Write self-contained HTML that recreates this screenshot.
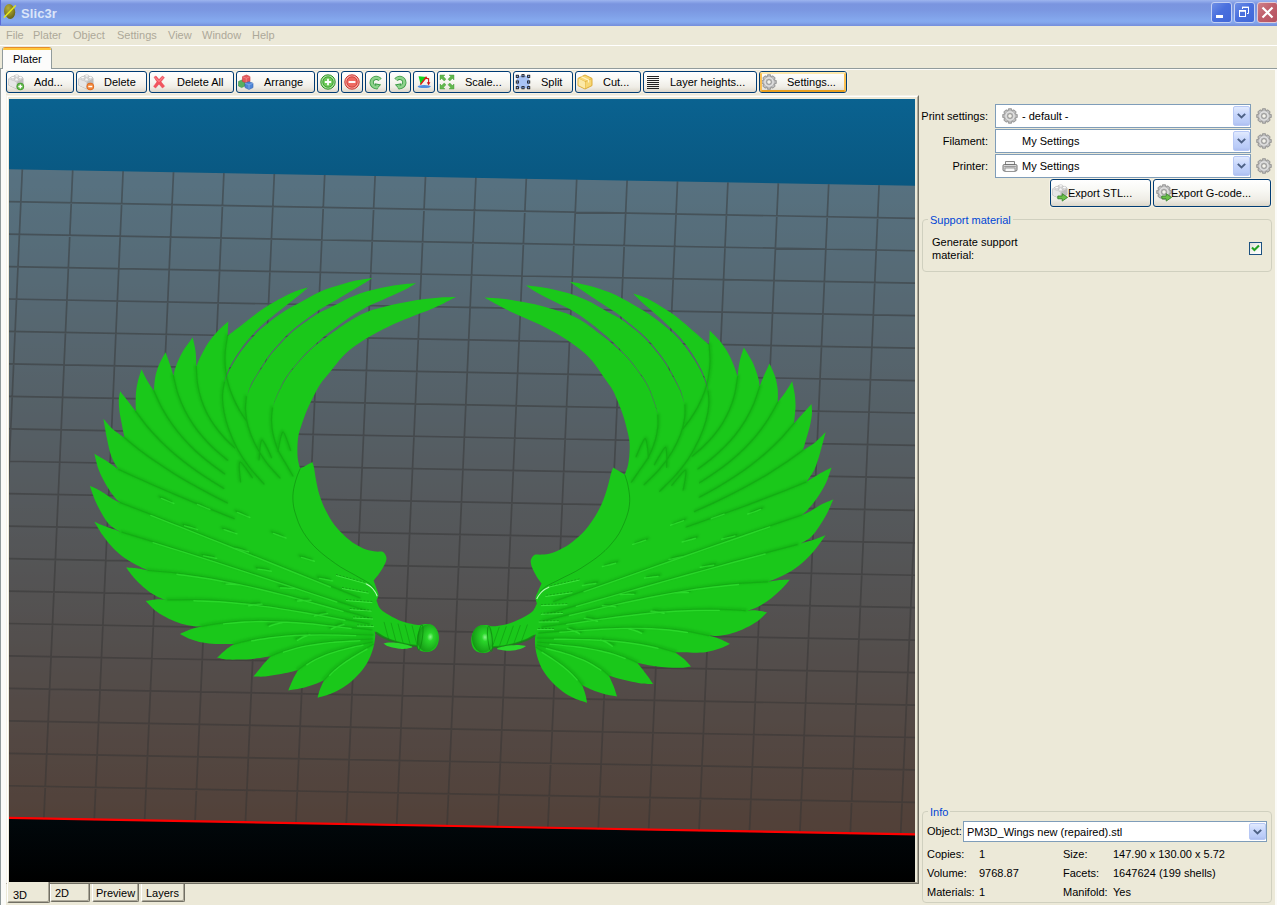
<!DOCTYPE html>
<html lang="en">
<head>
<meta charset="utf-8">
<title>Slic3r</title>
<style>
html,body{margin:0;padding:0;}
body{width:1277px;height:905px;overflow:hidden;position:relative;background:#ece9d8;
 font-family:"Liberation Sans",sans-serif;font-size:11px;color:#000;line-height:13px;}
.abs{position:absolute;}
.t{position:absolute;white-space:nowrap;line-height:13px;height:13px;}
#titlebar{left:0;top:0;width:1277px;height:26px;
 background:linear-gradient(to bottom,#9db5ee 0,#8aa4e8 2px,#7a94df 4px,#7b97e1 10px,#80a1e8 16px,#86aaef 21px,#83a4ea 23px,#7893df 25px,#7690dd 26px);}
#title{left:21px;top:6px;font-weight:bold;font-size:13px;line-height:16px;height:16px;color:#dbe5f9;letter-spacing:0.1px;}
.wb{position:absolute;top:2px;width:19px;height:19px;border:1px solid #c3d0f3;border-radius:3px;
 background:linear-gradient(135deg,#6f8fe6 0,#4a70de 45%,#4067d8 100%);}
.wb.close{background:linear-gradient(135deg,#cf8088 0,#c0606c 45%,#b55260 100%);border-color:#e3c9d3;}
#menubar{left:0;top:26px;width:1277px;height:19px;}
#menubar .t{color:#aca899;top:3px;}
#whiteline{left:0;top:45px;width:1277px;height:1px;background:#fff;}
/* notebook */
#nbtop{left:0;top:68px;width:1277px;height:1px;background:#919b9c;}
#nbtop2{left:1px;top:69px;width:1276px;height:1px;background:#fcfcfa;}
#nbleft{left:0;top:68px;width:1px;height:837px;background:#919b9c;}
#nbwhiteL{left:1px;top:69px;width:5px;height:836px;background:#fbfbf8;}
#nbwhiteR{left:1275px;top:69px;width:2px;height:836px;background:#fbfbf8;}
#tab{left:2px;top:47px;width:48px;height:22px;background:#fcfcfb;border:1px solid #919b9c;border-top:none;border-bottom:none;border-radius:3px 3px 0 0;overflow:hidden;}
#tab i{position:absolute;left:-1px;top:0;width:52px;height:1px;background:#e68b2c;}
#tab b{position:absolute;left:-1px;top:1px;width:52px;height:2px;background:#ffc73c;}
/* xp buttons */
.btn{position:absolute;box-sizing:border-box;border:1px solid #003c74;border-radius:3px;
 background:linear-gradient(to bottom,#ffffff 0,#f8f8f4 40%,#efede6 75%,#dcd7ca 100%);box-shadow:0 0 0 1px #f6f1e4;}
.btn .t{top:4px;}
.btn svg{position:absolute;}
.btn.hot:after{content:"";position:absolute;left:0;top:0;right:0;bottom:0;border-radius:2px;border:2px solid #f9c053;border-top-color:#fde8ab;border-bottom-color:#e8a020;}
/* combos */
.combo{position:absolute;box-sizing:border-box;border:1px solid #7f9db9;background:#fff;}
.combo .dd{position:absolute;right:0px;top:1px;bottom:1px;width:17px;border-radius:2px;border:1px solid #b7c8f5;box-sizing:border-box;
 background:linear-gradient(to bottom,#e1eafe 0,#c6d5fb 45%,#b9cbf7 85%,#aebff0 100%);}
.combo .dd svg{position:absolute;left:3px;top:50%;margin-top:-3px;}
.grp{position:absolute;box-sizing:border-box;border:1px solid #d0d0bf;border-radius:4px;}
.leg{position:absolute;background:#ece9d8;color:#0046d5;white-space:nowrap;line-height:13px;height:13px;padding:0 2px;}
/* viewport frame */
#vframe{left:6px;top:95px;width:913px;height:789px;box-sizing:border-box;border-left:1px solid #f6f3e8;border-top:1px solid #f6f3e8;border-right:1px solid #716f64;border-bottom:1px solid #716f64;background:#ece9d8;}
#vframe2{left:7px;top:96px;width:911px;height:787px;box-sizing:border-box;border-left:1px solid #ffffff;border-top:1px solid #ffffff;border-right:1px solid #aca899;border-bottom:1px solid #aca899;}
.btab{position:absolute;box-sizing:border-box;background:#ece9d8;border-left:1px solid #fff;border-right:1px solid #716f64;border-bottom:1px solid #716f64;box-shadow:inset -1px -1px 0 #aca899;border-radius:0 0 2px 2px;}
</style>
</head>
<body>
<!-- title bar -->
<div id="titlebar" class="abs"></div>
<svg class="abs" style="left:0;top:0" width="22" height="25" viewBox="0 0 22 25">
 <defs><radialGradient id="ig" cx="0.4" cy="0.3" r="0.75"><stop offset="0" stop-color="#b3ad3c"/><stop offset="0.55" stop-color="#8a8424"/><stop offset="1" stop-color="#5f5e16"/></radialGradient>
 <clipPath id="icA"><polygon points="3.2,18.3 16.2,4.8 16.2,-5 -5,-5 -5,18.3"/></clipPath>
 <clipPath id="icB"><polygon points="3.2,18.3 16.2,4.8 26,4.8 26,26 3.2,26"/></clipPath></defs>
 <ellipse cx="9.2" cy="10.9" rx="5.2" ry="6.9" fill="url(#ig)" clip-path="url(#icA)"/>
 <ellipse cx="10.2" cy="12.3" rx="5.0" ry="6.8" fill="url(#ig)" clip-path="url(#icB)"/>
 <path d="M4.4 17.1 L15.2 5.9" stroke="#e6e81c" stroke-width="1.5" stroke-linecap="round"/>
 <rect x="0" y="0" width="1" height="26" fill="#5a6bd8"/>
</svg>
<div id="title" class="t">Slic3r</div>
<div class="wb" style="left:1211px"><svg width="19" height="19"><rect x="4" y="12" width="7" height="3" fill="#fff"/></svg></div>
<div class="wb" style="left:1234px"><svg width="19" height="19"><path d="M7.5 4.5h6v6h-1.5M7.5 4.5v1.5" stroke="#fff" stroke-width="1" fill="none"/><rect x="7" y="3.6" width="7" height="1.4" fill="#fff"/><rect x="4.5" y="8" width="6" height="5.5" stroke="#fff" stroke-width="1" fill="none"/><rect x="4" y="7" width="7" height="1.6" fill="#fff"/></svg></div>
<div class="wb close" style="left:1257px"><svg width="19" height="19"><path d="M4.5 4.5l10 10M14.5 4.5l-10 10" stroke="#fff" stroke-width="2.2"/></svg></div>

<!-- menu bar -->
<div id="menubar" class="abs">
 <span class="t" style="left:6px">File</span>
 <span class="t" style="left:33px">Plater</span>
 <span class="t" style="left:73px">Object</span>
 <span class="t" style="left:117px">Settings</span>
 <span class="t" style="left:168px">View</span>
 <span class="t" style="left:202px">Window</span>
 <span class="t" style="left:252px">Help</span>
</div>
<div id="whiteline" class="abs"></div>

<!-- notebook -->
<div id="nbtop" class="abs"></div><div id="nbtop2" class="abs"></div>
<div id="nbwhiteL" class="abs"></div><div id="nbwhiteR" class="abs"></div>
<div id="nbleft" class="abs"></div>
<div id="tab" class="abs"><i></i><b></b><span class="t" style="left:10px;top:6px">Plater</span></div>

<div class="btn" style="left:6px;top:71px;width:68px;height:22px"><svg width="17" height="17" viewBox="0 0 17 17" style="left:1px;top:2px"><path d="M0.8 4.8 L7 1.6 L15 4.2 L15 10.6 L8.8 14.8 L0.8 11.2Z" fill="#dcdcdc" stroke="#a9a9a9" stroke-width="0.8"/>
<path d="M0.8 4.8 L8.8 7.8 L8.8 14.8 L0.8 11.2Z" fill="#e6e6e6"/>
<path d="M8.8 7.8 L15 4.2 L15 10.6 L8.8 14.8Z" fill="#bcbcbc"/>
<path d="M0.8 4.8 L7 1.6 L15 4.2 L8.8 7.8Z" fill="#f4f4f4"/>
<path d="M0.8 4.8 L8.8 7.8 L15 4.2M8.8 7.8V14.8" stroke="#c9c9c9" stroke-width="0.6" fill="none"/>
<g fill="#fbfbfb" stroke="#b4b4b4" stroke-width="0.55"><path d="M2.9 3.6v1.1a2 1.15 0 0 0 4 0v-1.1z"/><ellipse cx="4.9" cy="3.6" rx="2" ry="1.15"/>
<path d="M6.8 1.9v1.1a2 1.15 0 0 0 4 0v-1.1z"/><ellipse cx="8.8" cy="1.9" rx="2" ry="1.15"/>
<path d="M6.6 5.2v1.1a2 1.15 0 0 0 4 0v-1.1z"/><ellipse cx="8.6" cy="5.2" rx="2" ry="1.15"/>
<path d="M10.4 3.5v1.1a2 1.15 0 0 0 4 0v-1.1z"/><ellipse cx="12.4" cy="3.5" rx="2" ry="1.15"/></g>
<circle cx="12.3" cy="12.5" r="3.8" fill="#3f9b2c"/><circle cx="12.3" cy="12.5" r="3" fill="#7fd060" fill-opacity="0.55"/>
<path d="M12.3 10.5v4M10.3 12.5h4" stroke="#fff" stroke-width="1.4"/></svg><span class="t" style="left:27px">Add...</span></div>
<div class="btn" style="left:76px;top:71px;width:71px;height:22px"><svg width="17" height="17" viewBox="0 0 17 17" style="left:1px;top:2px"><path d="M0.8 4.8 L7 1.6 L15 4.2 L15 10.6 L8.8 14.8 L0.8 11.2Z" fill="#dcdcdc" stroke="#a9a9a9" stroke-width="0.8"/>
<path d="M0.8 4.8 L8.8 7.8 L8.8 14.8 L0.8 11.2Z" fill="#e6e6e6"/>
<path d="M8.8 7.8 L15 4.2 L15 10.6 L8.8 14.8Z" fill="#bcbcbc"/>
<path d="M0.8 4.8 L7 1.6 L15 4.2 L8.8 7.8Z" fill="#f4f4f4"/>
<path d="M0.8 4.8 L8.8 7.8 L15 4.2M8.8 7.8V14.8" stroke="#c9c9c9" stroke-width="0.6" fill="none"/>
<g fill="#fbfbfb" stroke="#b4b4b4" stroke-width="0.55"><path d="M2.9 3.6v1.1a2 1.15 0 0 0 4 0v-1.1z"/><ellipse cx="4.9" cy="3.6" rx="2" ry="1.15"/>
<path d="M6.8 1.9v1.1a2 1.15 0 0 0 4 0v-1.1z"/><ellipse cx="8.8" cy="1.9" rx="2" ry="1.15"/>
<path d="M6.6 5.2v1.1a2 1.15 0 0 0 4 0v-1.1z"/><ellipse cx="8.6" cy="5.2" rx="2" ry="1.15"/>
<path d="M10.4 3.5v1.1a2 1.15 0 0 0 4 0v-1.1z"/><ellipse cx="12.4" cy="3.5" rx="2" ry="1.15"/></g>
<circle cx="12.3" cy="12.5" r="3.8" fill="#e0661a"/><circle cx="12.3" cy="12.5" r="3" fill="#ffa55a" fill-opacity="0.55"/>
<path d="M10.3 12.5h4" stroke="#fff" stroke-width="1.5"/></svg><span class="t" style="left:27px">Delete</span></div>
<div class="btn" style="left:149px;top:71px;width:85px;height:22px"><svg width="16" height="16" viewBox="0 0 16 16" style="left:1px;top:2px">
<path d="M3 3.2 L5 2 L8 5.6 L11.4 2 L13.4 3.6 L10 7.8 L13.6 12.2 L11.4 14 L8 10 L4.6 14 L2.6 12.4 L6 7.8Z" fill="#f2545f" stroke="#e8404c" stroke-width="0.5"/>
<path d="M4 3.4 L8 7.6 L12 3.2" stroke="#ff9aa0" stroke-width="0.9" fill="none"/></svg><span class="t" style="left:27px">Delete All</span></div>
<div class="btn" style="left:236px;top:71px;width:79px;height:22px"><svg width="16" height="16" viewBox="0 0 16 16" style="left:1px;top:2px">
<path d="M0.5 7.5 L4 6 L7 7.2 V12 L3.6 13.6 L0.5 12Z" fill="#58b060" stroke="#3e8f48" stroke-width="0.6"/>
<path d="M4.5 2.6 L8.5 1 L12 2.6 V7.4 L8.5 9 L4.5 7.4Z" fill="#e5595c" stroke="#c23a40" stroke-width="0.6"/>
<path d="M4.5 2.6 L8.3 4.2 L12 2.6M8.3 4.2V9" stroke="#f59a9a" stroke-width="0.6" fill="none"/>
<path d="M7 9.2 L11 7.8 L15 9.2 V13.6 L11 15.4 L7 13.6Z" fill="#4f86d8" stroke="#2f62b0" stroke-width="0.6"/>
<path d="M7 9.2 L11 10.8 L15 9.2M11 10.8V15.4" stroke="#9cc0f2" stroke-width="0.6" fill="none"/></svg><span class="t" style="left:27px">Arrange</span></div>
<div class="btn" style="left:317px;top:71px;width:22px;height:22px"><svg width="16" height="16" viewBox="0 0 16 16" style="left:2px;top:2px">
<circle cx="8" cy="8" r="7.2" fill="#a9e59a" stroke="#2e8f2a" stroke-width="1"/>
<circle cx="8" cy="8" r="5.2" fill="#6fcb5a" stroke="#2e8f2a" stroke-width="0.8"/><path d="M8 4.8v6.4M4.8 8h6.4" stroke="#fff" stroke-width="1.8"/></svg></div>
<div class="btn" style="left:341px;top:71px;width:22px;height:22px"><svg width="16" height="16" viewBox="0 0 16 16" style="left:2px;top:2px">
<circle cx="8" cy="8" r="7.2" fill="#f7a59f" stroke="#c8342e" stroke-width="1"/>
<circle cx="8" cy="8" r="5.2" fill="#ee6a62" stroke="#c8342e" stroke-width="0.8"/><path d="M4.6 8h6.8" stroke="#fff" stroke-width="1.9"/></svg></div>
<div class="btn" style="left:365px;top:71px;width:22px;height:22px"><svg width="16" height="16" viewBox="0 0 16 16" style="left:2px;top:2px"><g>
<path d="M12 5.8 A4.6 4.6 0 1 0 9.6 12.9" stroke="#3c9a46" stroke-width="4.2" fill="none"/>
<path d="M6.6 9.2 L13.2 10.6 L8.6 15.6Z" fill="#3c9a46"/>
<path d="M12 5.8 A4.6 4.6 0 1 0 9.6 12.9" stroke="#8ed38c" stroke-width="2.6" fill="none"/>
<path d="M8 10.4 L11.6 11.2 L9 14Z" fill="#8ed38c"/></g></svg></div>
<div class="btn" style="left:389px;top:71px;width:22px;height:22px"><svg width="16" height="16" viewBox="0 0 16 16" style="left:2px;top:2px"><g transform="translate(16,0) scale(-1,1)">
<path d="M12 5.8 A4.6 4.6 0 1 0 9.6 12.9" stroke="#3c9a46" stroke-width="4.2" fill="none"/>
<path d="M6.6 9.2 L13.2 10.6 L8.6 15.6Z" fill="#3c9a46"/>
<path d="M12 5.8 A4.6 4.6 0 1 0 9.6 12.9" stroke="#8ed38c" stroke-width="2.6" fill="none"/>
<path d="M8 10.4 L11.6 11.2 L9 14Z" fill="#8ed38c"/></g></svg></div>
<div class="btn" style="left:413px;top:71px;width:22px;height:22px"><svg width="16" height="16" viewBox="0 0 16 16" style="left:2px;top:2px">
<ellipse cx="8.2" cy="12.6" rx="6.6" ry="1.5" fill="#4f8fe0"/>
<path d="M2.6 2.2 L10.4 3 L4.6 10.4Z" fill="#12d41e"/>
<path d="M4.4 10.6 L10.6 2.8" stroke="#e01818" stroke-width="1.5" fill="none"/>
<path d="M10 4.4 L12.6 4.8 L12.6 9" stroke="#d01818" stroke-width="1.1" fill="none"/>
<path d="M10.8 8.2 L14.4 8.2 L12.6 11.4Z" fill="#d01818"/></svg></div>
<div class="btn" style="left:437px;top:71px;width:74px;height:22px"><svg width="16" height="16" viewBox="0 0 16 16" style="left:1px;top:2px">
<g transform="translate(1,1)"><path d="M0 0 L5 0 L3.4 1.6 L6 4.2 L4.2 6 L1.6 3.4 L0 5Z" fill="#62b84e" stroke="#3f9435" stroke-width="0.4"/></g><g transform="translate(15,1) scale(-1,1)"><path d="M0 0 L5 0 L3.4 1.6 L6 4.2 L4.2 6 L1.6 3.4 L0 5Z" fill="#62b84e" stroke="#3f9435" stroke-width="0.4"/></g>
<g transform="translate(1,15) scale(1,-1)"><path d="M0 0 L5 0 L3.4 1.6 L6 4.2 L4.2 6 L1.6 3.4 L0 5Z" fill="#62b84e" stroke="#3f9435" stroke-width="0.4"/></g><g transform="translate(15,15) scale(-1,-1)"><path d="M0 0 L5 0 L3.4 1.6 L6 4.2 L4.2 6 L1.6 3.4 L0 5Z" fill="#62b84e" stroke="#3f9435" stroke-width="0.4"/></g></svg><span class="t" style="left:27px">Scale...</span></div>
<div class="btn" style="left:513px;top:71px;width:60px;height:22px"><svg width="16" height="16" viewBox="0 0 16 16" style="left:1px;top:2px">
<rect x="2.2" y="2.2" width="11.6" height="11.6" fill="#a9c4f5" stroke="#6f97e0" stroke-width="0.8" stroke-dasharray="1.5 1"/><rect x="1.2" y="1.2" width="2.2" height="2.2" fill="#7d9fe0" stroke="#111" stroke-width="0.8"/><rect x="6.9" y="0.6000000000000001" width="2.2" height="2.2" fill="#7d9fe0" stroke="#111" stroke-width="0.8"/><rect x="12.6" y="1.2" width="2.2" height="2.2" fill="#7d9fe0" stroke="#111" stroke-width="0.8"/><rect x="1.2" y="6.9" width="2.2" height="2.2" fill="#7d9fe0" stroke="#111" stroke-width="0.8"/><rect x="12.6" y="6.9" width="2.2" height="2.2" fill="#7d9fe0" stroke="#111" stroke-width="0.8"/><rect x="1.2" y="12.6" width="2.2" height="2.2" fill="#7d9fe0" stroke="#111" stroke-width="0.8"/><rect x="6.9" y="12.6" width="2.2" height="2.2" fill="#7d9fe0" stroke="#111" stroke-width="0.8"/><rect x="12.6" y="12.6" width="2.2" height="2.2" fill="#7d9fe0" stroke="#111" stroke-width="0.8"/></svg><span class="t" style="left:27px">Split</span></div>
<div class="btn" style="left:575px;top:71px;width:66px;height:22px"><svg width="16" height="16" viewBox="0 0 16 16" style="left:1px;top:2px">
<path d="M1 4.4 L8 1 L15 4.4 V11.6 L8 15 L1 11.6Z" fill="#f7d774" stroke="#d9a52a" stroke-width="0.9"/>
<path d="M1 4.4 L8 7.8 L15 4.4M8 7.8V15" stroke="#e0b040" stroke-width="0.8" fill="none"/>
<path d="M1.6 4.6 L8 7.8 V14.4 L1.6 11.3Z" fill="#fbe9a8"/>
<path d="M4.4 2.8 L11.6 6.2V8.6" stroke="#fff4c8" stroke-width="1.2" fill="none"/></svg><span class="t" style="left:27px">Cut...</span></div>
<div class="btn" style="left:643px;top:71px;width:114px;height:22px"><svg width="16" height="16" viewBox="0 0 16 16" style="left:1px;top:2px"><rect x="2" y="2" width="12" height="1" fill="#222"/><rect x="2" y="4" width="12" height="1" fill="#222"/><rect x="2" y="6" width="12" height="1" fill="#222"/><rect x="2" y="8" width="12" height="1" fill="#222"/><rect x="2" y="10" width="12" height="1" fill="#222"/><rect x="2" y="12" width="12" height="1" fill="#222"/><rect x="2" y="14" width="12" height="1" fill="#222"/></svg><span class="t" style="left:26px">Layer heights...</span></div>
<div class="btn hot" style="left:759px;top:71px;width:88px;height:22px"><svg width="16" height="16" viewBox="0 0 16 16" style="left:1px;top:2px">
<polygon points="15.24,6.46 15.24,9.54 12.99,10.05 12.98,10.08 14.21,12.03 12.03,14.21 10.08,12.98 10.05,12.99 9.54,15.24 6.46,15.24 5.95,12.99 5.92,12.98 3.97,14.21 1.79,12.03 3.02,10.08 3.01,10.05 0.76,9.54 0.76,6.46 3.01,5.95 3.02,5.92 1.79,3.97 3.97,1.79 5.92,3.02 5.95,3.01 6.46,0.76 9.54,0.76 10.05,3.01 10.08,3.02 12.03,1.79 14.21,3.97 12.98,5.92 12.99,5.95" fill="#bdbdbd" stroke="#858585" stroke-width="0.8"/>
<circle cx="8" cy="8" r="4.1" fill="none" stroke="#e6e6e6" stroke-width="1.3"/>
<circle cx="8" cy="8" r="2.3" fill="#f4f3ec" stroke="#858585" stroke-width="0.8"/></svg><span class="t" style="left:27px">Settings...</span></div>

<!-- viewport -->
<div id="vframe" class="abs"></div><div id="vframe2" class="abs"></div>
<svg width="906" height="783" viewBox="9 99 906 783" style="position:absolute;left:9px;top:99px;display:block">
<defs><linearGradient id="bg" x1="0" y1="0" x2="0" y2="1"><stop offset="0" stop-color="#0a6290"/><stop offset="1" stop-color="#000000"/></linearGradient></defs>
<rect x="9" y="99" width="906" height="783" fill="url(#bg)"/>
<polygon points="7,169.16 917,185.91 917,834.91 7,818.16" fill="#cc9980" fill-opacity="0.4"/>
<path d="M7,201.61L917,218.36M7,234.06L917,250.81M7,266.51L917,283.26M7,298.96L917,315.71M7,331.41L917,348.16M7,363.86L917,380.61M7,396.31L917,413.06M7,428.76L917,445.51M7,461.21L917,477.96M7,493.66L917,510.41M7,526.11L917,542.86M7,558.56L917,575.31M7,591.01L917,607.76M7,623.46L917,640.21M7,655.91L917,672.66M7,688.36L917,705.11M7,720.81L917,737.56M7,753.26L917,770.01M7,785.71L917,802.46M-28.10,168.52L-56.98,817.52M22.30,169.44L-6.58,818.44M72.70,170.37L43.82,819.37M123.10,171.30L94.22,820.30M173.50,172.23L144.62,821.23M223.90,173.15L195.02,822.15M274.30,174.08L245.42,823.08M324.70,175.01L295.82,824.01M375.10,175.94L346.22,824.94M425.50,176.86L396.62,825.86M475.90,177.79L447.02,826.79M526.30,178.72L497.42,827.72M576.70,179.65L547.82,828.65M627.10,180.57L598.22,829.57M677.50,181.50L648.62,830.50M727.90,182.43L699.02,831.43M778.30,183.36L749.42,832.36M828.70,184.28L799.82,833.28M879.10,185.21L850.22,834.21M929.50,186.14L900.62,835.14M979.90,187.06L951.02,836.06M1030.30,187.99L1001.42,836.99" stroke="#333333" stroke-opacity="0.47" stroke-width="1.7" fill="none"/>
<defs><filter id="soft" x="-5%" y="-5%" width="110%" height="110%"><feGaussianBlur stdDeviation="1.1"/></filter><radialGradient id="knobL" cx="0.62" cy="0.45" r="0.6"><stop offset="0" stop-color="#8df58d"/><stop offset="0.25" stop-color="#2ad62a"/><stop offset="1" stop-color="#149a14"/></radialGradient></defs>
<clipPath id="clipL"><path d="M455.9,297.1C453.3,297.2 445.8,297.2 440.6,297.5C435.4,297.8 430.1,298.4 424.9,299.0C419.7,299.6 414.4,300.5 409.2,301.4C404.0,302.3 398.1,303.5 393.5,304.5C388.9,305.5 385.7,306.6 381.8,307.6C377.9,308.7 373.9,309.4 370.0,310.8C366.1,312.2 361.9,314.1 358.2,316.0C354.5,317.9 351.5,319.8 348.0,322.0C344.5,324.2 340.2,327.2 337.1,329.4C334.0,331.6 331.9,332.9 329.1,335.0C326.3,337.1 322.4,340.4 320.1,342.1C317.8,343.9 317.7,343.6 315.5,345.5C313.4,347.3 309.9,350.3 307.1,353.2C304.2,356.0 301.1,359.5 298.4,362.6C295.6,365.8 292.9,368.9 290.6,372.0C288.2,375.1 286.0,378.5 284.3,381.4C282.6,384.2 281.7,386.3 280.4,389.1C279.0,391.9 277.5,394.9 276.2,398.1C274.9,401.2 273.1,406.3 272.5,408.0C273.0,406.3 274.5,401.1 275.8,397.9C277.0,394.7 278.5,391.7 279.8,388.9C281.2,386.1 282.0,383.9 283.7,381.0C285.4,378.2 287.7,374.7 290.0,371.6C292.4,368.4 295.1,365.3 297.8,362.2C300.6,359.0 303.7,355.5 306.5,352.6C309.4,349.7 312.8,346.7 314.9,344.7C317.0,342.8 316.7,342.9 319.1,340.9C321.5,338.8 326.1,334.8 329.1,332.4C332.1,330.0 334.0,328.7 337.1,326.4C340.2,324.1 344.5,321.0 348.0,318.6C351.5,316.2 354.5,314.2 358.2,312.0C361.9,309.8 366.1,307.3 370.0,305.3C373.9,303.3 377.9,301.9 381.8,300.2C385.7,298.5 389.6,296.9 393.5,295.1C397.4,293.3 401.6,291.6 405.3,289.6C409.0,287.6 414.1,284.4 415.9,283.3C413.5,283.5 406.4,283.9 401.4,284.5C396.4,285.1 390.9,285.9 385.7,286.9C380.5,287.9 374.3,289.3 370.0,290.4C365.7,291.5 363.3,292.4 360.0,293.6C356.7,294.8 353.2,296.2 350.0,297.6C346.8,299.0 344.5,300.3 341.0,302.0C337.5,303.7 332.8,306.2 329.2,308.0C325.6,309.8 323.3,310.5 319.7,312.6C316.0,314.7 310.9,318.2 307.3,320.7C303.7,323.2 301.1,324.9 297.9,327.5C294.6,330.1 291.1,332.9 287.7,336.2C284.3,339.5 280.5,343.7 277.4,347.1C274.4,350.5 271.9,353.3 269.5,356.4C267.1,359.5 265.1,362.8 263.2,365.7C261.2,368.7 259.5,371.6 257.7,374.3C256.0,377.0 254.2,379.7 252.9,382.2C251.6,384.6 250.8,386.7 249.7,389.1C248.6,391.5 247.0,395.5 246.4,396.8C246.9,395.5 248.3,391.4 249.3,388.9C250.3,386.4 251.0,384.3 252.3,381.8C253.6,379.3 255.4,376.7 257.1,373.9C258.7,371.1 260.5,368.3 262.4,365.3C264.4,362.2 266.3,359.0 268.7,355.8C271.1,352.6 273.5,349.7 276.6,346.3C279.6,342.9 283.3,338.5 286.7,335.2C290.1,331.9 293.7,329.0 296.9,326.3C300.2,323.7 302.7,321.9 306.3,319.3C309.9,316.7 314.9,313.0 318.3,310.6C321.8,308.3 323.9,307.1 327.0,305.2C330.1,303.3 333.5,301.5 337.1,299.4C340.7,297.3 344.9,294.9 348.8,292.6C352.7,290.3 356.6,287.9 360.6,285.5C364.6,283.1 370.7,279.2 372.7,278.0C370.7,278.3 364.6,279.1 360.6,279.8C356.6,280.5 352.7,281.2 348.8,282.2C344.9,283.2 341.0,284.5 337.1,285.7C333.2,286.9 329.2,288.0 325.3,289.6C321.4,291.2 317.4,293.1 313.5,295.1C309.6,297.1 305.6,299.4 301.8,301.4C298.1,303.4 294.5,305.2 291.0,307.2C287.5,309.2 284.4,311.2 281.0,313.5C277.6,315.8 274.2,318.2 270.7,320.9C267.1,323.7 263.1,326.8 259.6,330.1C256.0,333.5 252.5,337.4 249.4,341.0C246.2,344.6 243.4,348.2 240.7,351.8C238.1,355.5 235.7,359.1 233.5,362.7C231.4,366.3 229.4,370.2 227.9,373.5C226.4,376.8 225.0,380.9 224.4,382.4C224.8,380.9 225.7,376.5 227.1,373.1C228.4,369.7 230.4,365.8 232.5,362.1C234.5,358.4 236.9,354.7 239.5,351.0C242.1,347.3 244.9,343.5 248.0,339.8C251.1,336.1 254.7,332.1 258.2,328.7C261.7,325.2 265.7,322.0 269.1,319.1C272.6,316.1 275.5,313.7 279.0,310.9C282.5,308.2 286.6,305.0 290.0,302.4C293.4,299.8 296.4,297.6 299.4,295.1C302.4,292.6 306.6,288.8 308.0,287.5C306.3,288.0 301.2,289.2 297.8,290.4C294.4,291.6 292.5,292.4 287.7,294.8C282.9,297.2 274.3,301.8 268.9,305.1C263.5,308.4 259.6,311.3 255.2,314.5C250.8,317.7 246.4,321.4 242.7,324.3C238.9,327.2 235.2,330.1 232.7,332.0C230.2,333.9 228.4,335.1 227.6,335.7L228.3,321.5C226.5,323.1 221.1,327.6 217.6,331.3C214.1,335.0 210.5,339.4 207.6,343.8C204.7,348.2 202.0,353.8 200.1,357.6C198.2,361.4 196.9,365.3 196.3,366.8C196.2,364.2 196.2,356.3 195.6,351.4C195.0,346.5 193.2,339.7 192.7,337.4C191.1,339.6 186.0,346.0 183.2,350.8C180.4,355.6 177.6,361.9 176.0,366.0C174.4,370.1 173.8,374.1 173.4,375.7C172.9,373.9 171.5,369.0 170.2,365.1C168.9,361.2 166.4,354.4 165.6,352.3C164.5,354.4 160.6,360.9 158.9,365.1C157.2,369.3 156.0,373.3 155.2,377.6C154.4,381.9 154.1,388.6 153.9,390.8C152.9,389.2 149.8,385.0 147.7,381.4C145.6,377.8 142.4,371.2 141.4,369.2C140.8,371.4 138.5,378.3 137.6,382.6C136.7,386.9 136.1,390.4 135.8,395.2C135.5,400.0 135.8,408.6 135.8,411.3C134.9,410.1 132.7,407.2 130.1,403.9C127.5,400.5 121.8,393.3 120.1,391.2C119.9,392.7 118.9,396.8 118.8,400.2C118.7,403.6 119.0,407.3 119.5,411.5C120.0,415.7 121.2,420.8 122.0,425.2C122.8,429.6 124.1,435.7 124.5,437.8C122.5,436.3 116.1,432.2 112.6,429.0C109.1,425.8 104.9,420.5 103.4,418.8C104.0,422.1 105.7,432.6 107.0,438.8C108.3,445.1 109.5,451.4 111.3,456.3C113.1,461.2 116.3,466.0 117.6,468.2C118.8,470.4 118.6,469.3 118.8,469.5C118.2,469.1 117.4,468.6 115.1,467.0C112.8,465.4 108.5,462.3 105.1,460.1C101.6,457.9 96.2,454.9 94.4,453.8C95.1,456.5 96.8,464.9 98.8,470.1C100.8,475.3 103.6,480.6 106.3,485.2C109.0,489.8 112.7,494.8 115.1,497.7C117.5,500.6 119.6,501.9 120.5,502.7C119.2,502.1 115.8,500.8 112.6,498.9C109.4,497.0 105.1,493.6 101.3,491.4C97.5,489.2 91.7,486.7 89.8,485.8C90.7,488.2 93.1,495.7 95.0,500.2C96.9,504.7 99.0,508.7 101.3,512.7C103.6,516.7 106.1,521.1 108.8,524.0C111.5,526.9 115.4,528.9 117.6,530.3C119.8,531.7 121.3,532.0 122.0,532.3C121.3,532.0 120.4,531.7 117.6,530.7C114.8,529.7 109.0,527.8 105.1,526.3C101.2,524.8 96.2,522.5 94.4,521.7C95.8,523.9 99.6,530.8 102.6,535.1C105.6,539.4 109.0,543.9 112.6,547.6C116.1,551.4 119.9,554.7 123.9,557.6C127.9,560.5 132.3,563.0 136.4,565.1C140.5,567.2 146.3,569.6 148.3,570.5C146.3,570.1 140.1,568.8 136.4,568.3C132.7,567.8 127.8,567.7 126.1,567.6C127.4,569.3 131.1,574.6 133.9,577.7C136.7,580.8 139.6,583.7 142.7,586.4C145.8,589.1 149.4,591.9 152.7,594.0C156.0,596.1 160.1,598.0 162.7,599.0C165.2,600.0 167.1,599.8 168.0,600.0C166.1,599.9 160.0,599.2 156.3,599.4C152.6,599.5 147.5,600.6 145.7,600.9C147.5,602.6 152.5,608.3 156.3,611.3C160.2,614.3 164.6,616.7 168.8,618.8C173.0,620.9 177.2,622.5 181.4,623.8C185.6,625.0 190.5,625.9 193.9,626.3C197.3,626.7 200.7,626.3 202.0,626.3C200.0,626.8 193.8,628.2 190.1,629.5C186.4,630.8 181.8,633.2 180.1,633.9C181.8,634.7 186.3,637.4 190.1,638.9C193.9,640.4 198.5,641.8 202.7,642.6C206.9,643.4 211.0,643.7 215.2,643.9C219.4,644.1 224.5,643.9 227.7,643.9C230.9,643.9 233.1,644.1 234.2,644.1C232.7,645.1 228.0,647.9 225.2,650.2C222.3,652.5 218.4,656.5 217.1,657.7C218.9,658.0 223.8,659.2 227.7,659.5C231.6,659.8 236.1,659.6 240.3,659.5C244.5,659.4 248.6,659.3 252.8,658.9C257.0,658.5 262.3,657.5 265.3,657.0C268.3,656.5 270.1,656.2 271.0,656.0C269.4,657.7 264.5,663.0 261.6,666.4C258.7,669.8 254.8,674.8 253.4,676.5C255.4,676.5 261.2,676.8 265.3,676.5C269.4,676.2 273.6,675.3 277.8,674.6C282.0,673.9 287.0,672.9 290.4,672.1C293.8,671.3 296.9,670.2 298.2,669.8C297.3,671.5 294.2,676.8 292.6,680.2C291.0,683.6 289.0,688.7 288.3,690.4C290.5,690.0 297.0,689.3 301.3,688.3C305.6,687.3 310.1,686.0 313.9,684.6C317.7,683.2 322.4,680.9 324.1,680.2C323.4,681.7 321.2,686.1 320.1,689.0C319.0,691.9 318.0,696.2 317.6,697.7C319.7,697.1 326.0,695.7 330.2,694.0C334.4,692.3 338.7,690.2 342.7,687.7C346.7,685.2 350.4,682.2 354.0,678.9C357.6,675.6 361.3,671.5 364.0,667.7C366.7,664.0 368.6,660.2 370.3,656.4C372.0,652.6 373.2,648.6 374.0,645.1C374.8,641.6 375.2,637.4 375.3,635.1C375.4,632.8 374.7,631.9 374.6,631.3C376.0,632.1 379.4,634.6 382.8,636.3C386.2,638.0 391.1,640.0 395.3,641.4C399.5,642.8 404.2,643.8 407.8,644.5C411.4,645.2 415.1,645.5 416.6,645.7C417.1,646.4 418.2,649.0 419.5,650.0C420.8,651.0 422.6,651.6 424.5,651.8C426.4,652.0 429.1,651.9 431.0,651.2C432.9,650.5 434.7,649.2 436.0,647.5C437.3,645.8 438.2,643.2 438.6,641.0C439.0,638.8 438.9,636.2 438.4,634.0C437.9,631.8 436.8,629.6 435.5,628.0C434.2,626.4 432.2,625.3 430.5,624.6C428.8,623.9 426.7,623.9 425.0,624.0C423.3,624.1 421.2,624.8 420.4,625.0C419.3,624.9 417.2,625.0 414.1,624.4C411.0,623.8 405.8,622.9 401.6,621.3C397.4,619.7 392.6,617.1 389.0,615.0C385.4,612.9 382.4,611.2 380.3,608.8C378.2,606.4 377.1,601.9 376.5,600.5C376.8,599.6 378.4,597.0 378.4,595.0C378.4,593.0 377.3,590.9 376.5,588.5C375.7,586.1 374.1,581.8 373.6,580.5C374.6,579.2 377.7,575.7 379.5,573.0C381.3,570.3 383.5,567.1 384.6,564.5C385.8,561.9 386.7,559.7 386.4,557.6C386.1,555.5 384.7,553.0 383.0,552.0C381.3,551.0 378.8,552.0 376.0,551.6C373.2,551.2 369.5,550.9 366.0,549.6C362.5,548.3 358.4,546.1 355.0,544.0C351.6,541.9 349.2,540.1 345.8,537.0C342.4,533.9 337.9,529.6 334.5,525.1C331.1,520.6 328.0,515.1 325.5,510.1C323.0,505.1 321.1,500.0 319.5,495.0C317.9,490.0 316.9,484.6 316.0,480.0C315.1,475.4 314.5,470.1 313.9,467.1C313.3,464.1 312.6,462.9 312.4,462.0C311.3,462.6 308.0,464.4 306.0,465.5C304.0,466.6 301.2,468.1 300.2,468.6C299.8,467.2 298.5,463.1 298.0,460.0C297.5,456.9 297.4,453.8 297.4,450.0C297.4,446.2 297.6,441.0 298.2,437.0C298.8,433.0 299.7,430.5 301.2,426.0C302.7,421.5 304.9,415.1 307.0,410.0C309.1,404.9 311.9,399.6 314.1,395.2C316.3,390.8 317.8,387.8 320.4,383.9C323.0,380.0 326.3,376.6 330.0,372.0C333.7,367.4 338.6,360.8 342.7,356.5C346.8,352.2 350.6,349.3 354.5,346.3C358.4,343.3 362.4,340.8 366.3,338.4C370.2,336.0 374.6,333.7 377.8,332.0C381.0,330.3 382.4,329.6 385.7,328.0C389.0,326.4 393.6,324.2 397.5,322.5C401.4,320.8 405.3,319.4 409.2,317.8C413.1,316.2 417.1,314.7 421.0,313.1C424.9,311.5 428.8,310.1 432.7,308.4C436.6,306.7 440.6,304.8 444.5,302.9C448.4,301.0 454.0,298.1 455.9,297.1Z"/></clipPath>
<path d="M455.9,297.1C453.3,297.2 445.8,297.2 440.6,297.5C435.4,297.8 430.1,298.4 424.9,299.0C419.7,299.6 414.4,300.5 409.2,301.4C404.0,302.3 398.1,303.5 393.5,304.5C388.9,305.5 385.7,306.6 381.8,307.6C377.9,308.7 373.9,309.4 370.0,310.8C366.1,312.2 361.9,314.1 358.2,316.0C354.5,317.9 351.5,319.8 348.0,322.0C344.5,324.2 340.2,327.2 337.1,329.4C334.0,331.6 331.9,332.9 329.1,335.0C326.3,337.1 322.4,340.4 320.1,342.1C317.8,343.9 317.7,343.6 315.5,345.5C313.4,347.3 309.9,350.3 307.1,353.2C304.2,356.0 301.1,359.5 298.4,362.6C295.6,365.8 292.9,368.9 290.6,372.0C288.2,375.1 286.0,378.5 284.3,381.4C282.6,384.2 281.7,386.3 280.4,389.1C279.0,391.9 277.5,394.9 276.2,398.1C274.9,401.2 273.1,406.3 272.5,408.0C273.0,406.3 274.5,401.1 275.8,397.9C277.0,394.7 278.5,391.7 279.8,388.9C281.2,386.1 282.0,383.9 283.7,381.0C285.4,378.2 287.7,374.7 290.0,371.6C292.4,368.4 295.1,365.3 297.8,362.2C300.6,359.0 303.7,355.5 306.5,352.6C309.4,349.7 312.8,346.7 314.9,344.7C317.0,342.8 316.7,342.9 319.1,340.9C321.5,338.8 326.1,334.8 329.1,332.4C332.1,330.0 334.0,328.7 337.1,326.4C340.2,324.1 344.5,321.0 348.0,318.6C351.5,316.2 354.5,314.2 358.2,312.0C361.9,309.8 366.1,307.3 370.0,305.3C373.9,303.3 377.9,301.9 381.8,300.2C385.7,298.5 389.6,296.9 393.5,295.1C397.4,293.3 401.6,291.6 405.3,289.6C409.0,287.6 414.1,284.4 415.9,283.3C413.5,283.5 406.4,283.9 401.4,284.5C396.4,285.1 390.9,285.9 385.7,286.9C380.5,287.9 374.3,289.3 370.0,290.4C365.7,291.5 363.3,292.4 360.0,293.6C356.7,294.8 353.2,296.2 350.0,297.6C346.8,299.0 344.5,300.3 341.0,302.0C337.5,303.7 332.8,306.2 329.2,308.0C325.6,309.8 323.3,310.5 319.7,312.6C316.0,314.7 310.9,318.2 307.3,320.7C303.7,323.2 301.1,324.9 297.9,327.5C294.6,330.1 291.1,332.9 287.7,336.2C284.3,339.5 280.5,343.7 277.4,347.1C274.4,350.5 271.9,353.3 269.5,356.4C267.1,359.5 265.1,362.8 263.2,365.7C261.2,368.7 259.5,371.6 257.7,374.3C256.0,377.0 254.2,379.7 252.9,382.2C251.6,384.6 250.8,386.7 249.7,389.1C248.6,391.5 247.0,395.5 246.4,396.8C246.9,395.5 248.3,391.4 249.3,388.9C250.3,386.4 251.0,384.3 252.3,381.8C253.6,379.3 255.4,376.7 257.1,373.9C258.7,371.1 260.5,368.3 262.4,365.3C264.4,362.2 266.3,359.0 268.7,355.8C271.1,352.6 273.5,349.7 276.6,346.3C279.6,342.9 283.3,338.5 286.7,335.2C290.1,331.9 293.7,329.0 296.9,326.3C300.2,323.7 302.7,321.9 306.3,319.3C309.9,316.7 314.9,313.0 318.3,310.6C321.8,308.3 323.9,307.1 327.0,305.2C330.1,303.3 333.5,301.5 337.1,299.4C340.7,297.3 344.9,294.9 348.8,292.6C352.7,290.3 356.6,287.9 360.6,285.5C364.6,283.1 370.7,279.2 372.7,278.0C370.7,278.3 364.6,279.1 360.6,279.8C356.6,280.5 352.7,281.2 348.8,282.2C344.9,283.2 341.0,284.5 337.1,285.7C333.2,286.9 329.2,288.0 325.3,289.6C321.4,291.2 317.4,293.1 313.5,295.1C309.6,297.1 305.6,299.4 301.8,301.4C298.1,303.4 294.5,305.2 291.0,307.2C287.5,309.2 284.4,311.2 281.0,313.5C277.6,315.8 274.2,318.2 270.7,320.9C267.1,323.7 263.1,326.8 259.6,330.1C256.0,333.5 252.5,337.4 249.4,341.0C246.2,344.6 243.4,348.2 240.7,351.8C238.1,355.5 235.7,359.1 233.5,362.7C231.4,366.3 229.4,370.2 227.9,373.5C226.4,376.8 225.0,380.9 224.4,382.4C224.8,380.9 225.7,376.5 227.1,373.1C228.4,369.7 230.4,365.8 232.5,362.1C234.5,358.4 236.9,354.7 239.5,351.0C242.1,347.3 244.9,343.5 248.0,339.8C251.1,336.1 254.7,332.1 258.2,328.7C261.7,325.2 265.7,322.0 269.1,319.1C272.6,316.1 275.5,313.7 279.0,310.9C282.5,308.2 286.6,305.0 290.0,302.4C293.4,299.8 296.4,297.6 299.4,295.1C302.4,292.6 306.6,288.8 308.0,287.5C306.3,288.0 301.2,289.2 297.8,290.4C294.4,291.6 292.5,292.4 287.7,294.8C282.9,297.2 274.3,301.8 268.9,305.1C263.5,308.4 259.6,311.3 255.2,314.5C250.8,317.7 246.4,321.4 242.7,324.3C238.9,327.2 235.2,330.1 232.7,332.0C230.2,333.9 228.4,335.1 227.6,335.7L228.3,321.5C226.5,323.1 221.1,327.6 217.6,331.3C214.1,335.0 210.5,339.4 207.6,343.8C204.7,348.2 202.0,353.8 200.1,357.6C198.2,361.4 196.9,365.3 196.3,366.8C196.2,364.2 196.2,356.3 195.6,351.4C195.0,346.5 193.2,339.7 192.7,337.4C191.1,339.6 186.0,346.0 183.2,350.8C180.4,355.6 177.6,361.9 176.0,366.0C174.4,370.1 173.8,374.1 173.4,375.7C172.9,373.9 171.5,369.0 170.2,365.1C168.9,361.2 166.4,354.4 165.6,352.3C164.5,354.4 160.6,360.9 158.9,365.1C157.2,369.3 156.0,373.3 155.2,377.6C154.4,381.9 154.1,388.6 153.9,390.8C152.9,389.2 149.8,385.0 147.7,381.4C145.6,377.8 142.4,371.2 141.4,369.2C140.8,371.4 138.5,378.3 137.6,382.6C136.7,386.9 136.1,390.4 135.8,395.2C135.5,400.0 135.8,408.6 135.8,411.3C134.9,410.1 132.7,407.2 130.1,403.9C127.5,400.5 121.8,393.3 120.1,391.2C119.9,392.7 118.9,396.8 118.8,400.2C118.7,403.6 119.0,407.3 119.5,411.5C120.0,415.7 121.2,420.8 122.0,425.2C122.8,429.6 124.1,435.7 124.5,437.8C122.5,436.3 116.1,432.2 112.6,429.0C109.1,425.8 104.9,420.5 103.4,418.8C104.0,422.1 105.7,432.6 107.0,438.8C108.3,445.1 109.5,451.4 111.3,456.3C113.1,461.2 116.3,466.0 117.6,468.2C118.8,470.4 118.6,469.3 118.8,469.5C118.2,469.1 117.4,468.6 115.1,467.0C112.8,465.4 108.5,462.3 105.1,460.1C101.6,457.9 96.2,454.9 94.4,453.8C95.1,456.5 96.8,464.9 98.8,470.1C100.8,475.3 103.6,480.6 106.3,485.2C109.0,489.8 112.7,494.8 115.1,497.7C117.5,500.6 119.6,501.9 120.5,502.7C119.2,502.1 115.8,500.8 112.6,498.9C109.4,497.0 105.1,493.6 101.3,491.4C97.5,489.2 91.7,486.7 89.8,485.8C90.7,488.2 93.1,495.7 95.0,500.2C96.9,504.7 99.0,508.7 101.3,512.7C103.6,516.7 106.1,521.1 108.8,524.0C111.5,526.9 115.4,528.9 117.6,530.3C119.8,531.7 121.3,532.0 122.0,532.3C121.3,532.0 120.4,531.7 117.6,530.7C114.8,529.7 109.0,527.8 105.1,526.3C101.2,524.8 96.2,522.5 94.4,521.7C95.8,523.9 99.6,530.8 102.6,535.1C105.6,539.4 109.0,543.9 112.6,547.6C116.1,551.4 119.9,554.7 123.9,557.6C127.9,560.5 132.3,563.0 136.4,565.1C140.5,567.2 146.3,569.6 148.3,570.5C146.3,570.1 140.1,568.8 136.4,568.3C132.7,567.8 127.8,567.7 126.1,567.6C127.4,569.3 131.1,574.6 133.9,577.7C136.7,580.8 139.6,583.7 142.7,586.4C145.8,589.1 149.4,591.9 152.7,594.0C156.0,596.1 160.1,598.0 162.7,599.0C165.2,600.0 167.1,599.8 168.0,600.0C166.1,599.9 160.0,599.2 156.3,599.4C152.6,599.5 147.5,600.6 145.7,600.9C147.5,602.6 152.5,608.3 156.3,611.3C160.2,614.3 164.6,616.7 168.8,618.8C173.0,620.9 177.2,622.5 181.4,623.8C185.6,625.0 190.5,625.9 193.9,626.3C197.3,626.7 200.7,626.3 202.0,626.3C200.0,626.8 193.8,628.2 190.1,629.5C186.4,630.8 181.8,633.2 180.1,633.9C181.8,634.7 186.3,637.4 190.1,638.9C193.9,640.4 198.5,641.8 202.7,642.6C206.9,643.4 211.0,643.7 215.2,643.9C219.4,644.1 224.5,643.9 227.7,643.9C230.9,643.9 233.1,644.1 234.2,644.1C232.7,645.1 228.0,647.9 225.2,650.2C222.3,652.5 218.4,656.5 217.1,657.7C218.9,658.0 223.8,659.2 227.7,659.5C231.6,659.8 236.1,659.6 240.3,659.5C244.5,659.4 248.6,659.3 252.8,658.9C257.0,658.5 262.3,657.5 265.3,657.0C268.3,656.5 270.1,656.2 271.0,656.0C269.4,657.7 264.5,663.0 261.6,666.4C258.7,669.8 254.8,674.8 253.4,676.5C255.4,676.5 261.2,676.8 265.3,676.5C269.4,676.2 273.6,675.3 277.8,674.6C282.0,673.9 287.0,672.9 290.4,672.1C293.8,671.3 296.9,670.2 298.2,669.8C297.3,671.5 294.2,676.8 292.6,680.2C291.0,683.6 289.0,688.7 288.3,690.4C290.5,690.0 297.0,689.3 301.3,688.3C305.6,687.3 310.1,686.0 313.9,684.6C317.7,683.2 322.4,680.9 324.1,680.2C323.4,681.7 321.2,686.1 320.1,689.0C319.0,691.9 318.0,696.2 317.6,697.7C319.7,697.1 326.0,695.7 330.2,694.0C334.4,692.3 338.7,690.2 342.7,687.7C346.7,685.2 350.4,682.2 354.0,678.9C357.6,675.6 361.3,671.5 364.0,667.7C366.7,664.0 368.6,660.2 370.3,656.4C372.0,652.6 373.2,648.6 374.0,645.1C374.8,641.6 375.2,637.4 375.3,635.1C375.4,632.8 374.7,631.9 374.6,631.3C376.0,632.1 379.4,634.6 382.8,636.3C386.2,638.0 391.1,640.0 395.3,641.4C399.5,642.8 404.2,643.8 407.8,644.5C411.4,645.2 415.1,645.5 416.6,645.7C417.1,646.4 418.2,649.0 419.5,650.0C420.8,651.0 422.6,651.6 424.5,651.8C426.4,652.0 429.1,651.9 431.0,651.2C432.9,650.5 434.7,649.2 436.0,647.5C437.3,645.8 438.2,643.2 438.6,641.0C439.0,638.8 438.9,636.2 438.4,634.0C437.9,631.8 436.8,629.6 435.5,628.0C434.2,626.4 432.2,625.3 430.5,624.6C428.8,623.9 426.7,623.9 425.0,624.0C423.3,624.1 421.2,624.8 420.4,625.0C419.3,624.9 417.2,625.0 414.1,624.4C411.0,623.8 405.8,622.9 401.6,621.3C397.4,619.7 392.6,617.1 389.0,615.0C385.4,612.9 382.4,611.2 380.3,608.8C378.2,606.4 377.1,601.9 376.5,600.5C376.8,599.6 378.4,597.0 378.4,595.0C378.4,593.0 377.3,590.9 376.5,588.5C375.7,586.1 374.1,581.8 373.6,580.5C374.6,579.2 377.7,575.7 379.5,573.0C381.3,570.3 383.5,567.1 384.6,564.5C385.8,561.9 386.7,559.7 386.4,557.6C386.1,555.5 384.7,553.0 383.0,552.0C381.3,551.0 378.8,552.0 376.0,551.6C373.2,551.2 369.5,550.9 366.0,549.6C362.5,548.3 358.4,546.1 355.0,544.0C351.6,541.9 349.2,540.1 345.8,537.0C342.4,533.9 337.9,529.6 334.5,525.1C331.1,520.6 328.0,515.1 325.5,510.1C323.0,505.1 321.1,500.0 319.5,495.0C317.9,490.0 316.9,484.6 316.0,480.0C315.1,475.4 314.5,470.1 313.9,467.1C313.3,464.1 312.6,462.9 312.4,462.0C311.3,462.6 308.0,464.4 306.0,465.5C304.0,466.6 301.2,468.1 300.2,468.6C299.8,467.2 298.5,463.1 298.0,460.0C297.5,456.9 297.4,453.8 297.4,450.0C297.4,446.2 297.6,441.0 298.2,437.0C298.8,433.0 299.7,430.5 301.2,426.0C302.7,421.5 304.9,415.1 307.0,410.0C309.1,404.9 311.9,399.6 314.1,395.2C316.3,390.8 317.8,387.8 320.4,383.9C323.0,380.0 326.3,376.6 330.0,372.0C333.7,367.4 338.6,360.8 342.7,356.5C346.8,352.2 350.6,349.3 354.5,346.3C358.4,343.3 362.4,340.8 366.3,338.4C370.2,336.0 374.6,333.7 377.8,332.0C381.0,330.3 382.4,329.6 385.7,328.0C389.0,326.4 393.6,324.2 397.5,322.5C401.4,320.8 405.3,319.4 409.2,317.8C413.1,316.2 417.1,314.7 421.0,313.1C424.9,311.5 428.8,310.1 432.7,308.4C436.6,306.7 440.6,304.8 444.5,302.9C448.4,301.0 454.0,298.1 455.9,297.1Z" fill="#1ac81a"/>
<g clip-path="url(#clipL)"><path d="M120.5,502.7C125.5,504.6 140.5,510.4 150.5,514.3C160.5,518.2 170.5,522.2 180.5,526.1C190.5,530.0 200.5,534.0 210.5,538.0C220.5,541.9 230.5,545.9 240.4,549.9C250.4,553.9 260.4,557.9 270.3,561.9C280.3,565.9 290.3,569.9 300.2,573.9C310.2,577.9 320.2,581.9 330.1,585.9C340.1,590.0 355.0,596.0 360.0,598.0M122.0,532.3C127.1,533.8 142.5,538.5 152.8,541.6C163.1,544.7 173.3,547.9 183.5,551.1C193.8,554.3 204.0,557.6 214.2,560.8C224.4,564.1 234.6,567.4 244.8,570.7C255.0,574.0 265.2,577.3 275.4,580.7C285.6,584.0 295.8,587.4 305.9,590.8C316.1,594.1 326.3,597.5 336.5,600.9C346.6,604.2 361.9,609.3 367.0,611.0M148.3,570.5C153.0,570.9 167.3,572.0 176.7,573.1C186.2,574.2 195.5,575.6 204.9,577.1C214.2,578.6 223.5,580.4 232.7,582.3C242.0,584.1 251.2,586.2 260.4,588.4C269.6,590.5 278.8,592.9 287.9,595.2C297.1,597.6 306.2,600.1 315.3,602.6C324.5,605.1 333.6,607.7 342.7,610.3C351.8,612.8 365.4,616.7 370.0,618.0M168.0,600.0C172.3,599.9 185.1,599.5 193.6,599.6C202.1,599.7 210.6,600.1 219.0,600.6C227.5,601.2 235.9,602.0 244.3,602.9C252.7,603.8 261.1,604.9 269.5,606.0C277.8,607.2 286.2,608.6 294.5,610.0C302.9,611.4 311.2,612.9 319.6,614.4C327.9,616.0 336.2,617.6 344.5,619.2C352.9,620.8 365.3,623.2 369.5,624.0M202.0,626.3C205.6,625.7 216.2,623.7 223.3,622.8C230.4,621.9 237.5,621.3 244.6,620.9C251.7,620.5 258.8,620.4 265.9,620.5C273.0,620.5 280.1,620.8 287.2,621.2C294.2,621.5 301.3,622.1 308.4,622.7C315.5,623.3 322.5,624.1 329.6,624.9C336.7,625.7 343.7,626.5 350.8,627.4C357.9,628.2 368.5,629.6 372.0,630.0M234.2,644.1C237.1,643.4 245.6,641.0 251.3,639.8C257.1,638.6 262.8,637.7 268.6,636.9C274.3,636.1 280.1,635.5 285.9,635.0C291.7,634.6 297.4,634.3 303.2,634.1C309.0,633.9 314.8,633.8 320.6,633.8C326.5,633.8 332.3,633.9 338.1,634.0C343.9,634.1 349.7,634.3 355.5,634.5C361.4,634.6 370.1,634.9 373.0,635.0M271.0,656.0C273.0,655.2 279.1,652.5 283.2,651.1C287.3,649.6 291.5,648.4 295.6,647.3C299.8,646.2 304.0,645.3 308.2,644.5C312.4,643.7 316.7,643.1 320.9,642.6C325.2,642.0 329.5,641.6 333.7,641.2C338.0,640.8 342.3,640.6 346.6,640.3C350.9,640.0 355.2,639.8 359.6,639.6C363.9,639.4 370.3,639.1 372.5,639.0M298.2,669.8C299.6,668.8 303.7,665.5 306.5,663.7C309.3,661.8 312.2,660.2 315.2,658.6C318.2,657.1 321.2,655.8 324.3,654.5C327.3,653.3 330.4,652.2 333.6,651.2C336.7,650.2 339.9,649.3 343.2,648.5C346.4,647.6 349.6,646.9 352.9,646.1C356.1,645.4 359.4,644.7 362.7,644.0C365.9,643.4 370.9,642.3 372.5,642.0M324.1,680.2C325.0,679.2 327.5,676.2 329.3,674.3C331.0,672.5 332.9,670.7 334.8,669.0C336.8,667.4 338.7,665.8 340.8,664.2C342.8,662.7 344.9,661.2 347.0,659.8C349.1,658.4 351.3,657.1 353.4,655.7C355.6,654.4 357.8,653.1 360.0,651.8C362.2,650.5 364.5,649.3 366.7,648.0C368.9,646.8 372.3,644.9 373.4,644.3M118.8,469.5C122.0,471.0 131.5,475.4 137.8,478.2C144.2,481.1 150.6,483.9 157.0,486.7C163.4,489.5 169.8,492.3 176.2,495.0C182.6,497.7 189.0,500.4 195.5,503.1C201.9,505.7 208.4,508.3 214.9,511.0C221.3,513.6 231.0,517.4 234.3,518.7M124.5,437.8C127.2,439.9 135.1,446.6 140.5,450.7C146.0,454.8 151.5,458.8 157.1,462.6C162.7,466.5 168.4,470.1 174.1,473.7C179.9,477.3 185.7,480.7 191.6,484.1C197.5,487.4 203.4,490.6 209.4,493.8C215.4,497.0 224.4,501.5 227.5,503.0M135.8,411.3C137.9,414.0 143.8,422.4 148.1,427.5C152.4,432.6 157.0,437.4 161.6,442.1C166.2,446.7 171.1,451.1 176.0,455.3C181.0,459.5 186.1,463.5 191.3,467.3C196.5,471.1 201.9,474.8 207.3,478.3C212.7,481.8 221.1,486.8 223.8,488.5M153.9,390.8C155.3,393.8 159.2,403.0 162.3,408.6C165.4,414.2 168.7,419.5 172.3,424.5C175.9,429.6 179.7,434.3 183.8,438.8C187.8,443.3 192.0,447.6 196.4,451.7C200.8,455.7 205.5,459.6 210.2,463.3C214.9,467.0 222.3,472.2 224.8,474.0M173.4,375.7C174.2,378.7 176.1,388.2 178.0,394.0C179.9,399.7 182.2,405.1 184.8,410.3C187.3,415.4 190.3,420.2 193.4,424.8C196.5,429.4 200.0,433.7 203.6,437.8C207.2,442.0 211.1,445.8 215.1,449.6C219.1,453.3 225.6,458.5 227.7,460.3M196.3,366.8C196.5,369.7 196.8,378.7 197.6,384.2C198.5,389.7 199.8,394.9 201.4,399.8C203.0,404.7 205.0,409.3 207.2,413.7C209.5,418.1 212.1,422.2 214.9,426.2C217.7,430.1 220.8,433.9 224.1,437.5C227.3,441.1 232.8,446.1 234.5,447.8M227.6,335.7C227.2,338.6 225.5,347.4 225.2,352.9C224.8,358.4 225.0,363.7 225.5,368.8C226.0,373.9 226.9,378.8 228.2,383.6C229.4,388.3 231.1,392.9 233.0,397.3C234.9,401.8 237.1,406.1 239.5,410.3C241.9,414.5 246.1,420.5 247.5,422.5M224.4,382.4C224.1,384.7 222.6,391.1 222.5,396.0C222.4,400.9 222.9,406.3 224.0,412.0C225.1,417.7 226.7,423.7 229.0,430.0C231.3,436.3 234.5,443.7 238.0,450.0C241.5,456.3 245.7,462.3 250.0,468.0C254.3,473.7 261.7,481.3 264.0,484.0M246.4,396.8C246.2,399.0 245.2,405.1 245.5,410.0C245.8,414.9 246.4,420.3 248.0,426.0C249.6,431.7 252.0,438.0 255.0,444.0C258.0,450.0 261.8,456.3 266.0,462.0C270.2,467.7 277.7,475.3 280.0,478.0M272.5,408.0C272.3,410.0 271.4,415.7 271.5,420.0C271.6,424.3 271.9,429.0 273.0,434.0C274.1,439.0 275.8,445.0 278.0,450.0C280.2,455.0 283.5,459.7 286.0,464.0C288.5,468.3 291.8,474.0 293.0,476.0M271.5,457.6C270.7,455.8 268.2,450.0 266.6,447.0C265.0,444.1 263.1,439.9 262.0,440.0C260.9,440.1 260.5,444.6 260.0,447.9C259.6,451.2 259.3,457.8 259.1,459.8M290.6,450.5C290.0,448.6 288.1,442.5 286.8,439.4C285.6,436.3 284.1,431.9 283.0,432.0C281.9,432.1 281.0,436.5 280.2,439.8C279.4,443.0 278.4,449.4 278.0,451.4M252.4,477.7C251.3,476.1 247.8,470.9 245.8,468.3C243.7,465.7 241.1,461.7 240.0,462.0C238.9,462.3 239.3,466.7 239.4,470.0C239.5,473.3 240.4,480.0 240.6,482.0M183.2,524.4C184.2,524.7 187.3,525.2 189.4,525.9C191.4,526.6 194.5,528.0 195.6,528.4M202.0,554.5C203.1,554.6 206.2,554.9 208.4,555.4C210.5,555.8 213.7,556.9 214.7,557.2M224.6,582.7C225.7,582.7 228.9,582.5 231.1,582.7C233.2,582.8 236.5,583.4 237.6,583.6M247.1,604.3C248.2,604.1 251.4,603.3 253.6,603.1C255.7,602.9 259.0,603.0 260.0,602.9M267.8,625.0C268.8,624.6 272.0,623.3 274.0,622.7C276.1,622.1 279.3,621.6 280.3,621.4M296.0,639.1C297.0,638.5 299.9,636.7 301.8,635.8C303.8,634.8 306.7,633.8 307.7,633.4M222.7,528.2C223.7,528.5 226.8,529.2 228.8,529.9C230.8,530.7 233.9,532.2 234.9,532.6M234.0,547.0C235.0,547.2 238.2,547.7 240.2,548.3C242.3,548.9 245.5,550.2 246.5,550.6M256.5,567.7C257.6,567.8 260.8,568.0 262.9,568.3C265.0,568.7 268.2,569.7 269.3,570.0M279.1,586.5C280.2,586.5 283.4,586.3 285.6,586.5C287.7,586.6 291.0,587.2 292.1,587.4M296.0,599.6C297.1,599.5 300.3,598.9 302.5,598.9C304.7,598.8 307.9,599.1 309.0,599.1M312.9,614.7C314.0,614.4 317.2,613.4 319.3,613.1C321.4,612.7 324.6,612.5 325.7,612.4M329.8,627.8C330.8,627.3 333.9,625.8 335.9,625.1C337.9,624.3 341.0,623.6 342.0,623.4M160.0,497.0C161.0,497.4 164.0,498.3 165.9,499.1C167.9,500.0 170.9,501.8 171.9,502.3M196.0,503.0C197.0,503.4 200.0,504.3 201.9,505.1C203.9,506.0 206.9,507.8 207.9,508.3M236.0,511.0C237.0,511.4 240.0,512.3 241.9,513.1C243.9,514.0 246.9,515.8 247.9,516.3M272.0,532.0C273.0,532.3 276.0,533.1 278.0,533.9C280.0,534.7 283.0,536.4 284.1,536.9M300.0,556.0C301.0,556.3 304.1,556.8 306.2,557.5C308.2,558.2 311.3,559.6 312.4,560.0M318.0,577.0C319.1,577.1 322.2,577.4 324.4,577.9C326.5,578.3 329.7,579.4 330.7,579.7" fill="none" stroke="#0a7a0a" stroke-opacity="0.20" stroke-width="3.2" stroke-linecap="round" filter="url(#soft)" transform="translate(-0.8,-0.8)"/></g>
<path d="M120.5,502.7C125.5,504.6 140.5,510.4 150.5,514.3C160.5,518.2 170.5,522.2 180.5,526.1C190.5,530.0 200.5,534.0 210.5,538.0C220.5,541.9 230.5,545.9 240.4,549.9C250.4,553.9 260.4,557.9 270.3,561.9C280.3,565.9 290.3,569.9 300.2,573.9C310.2,577.9 320.2,581.9 330.1,585.9C340.1,590.0 355.0,596.0 360.0,598.0M122.0,532.3C127.1,533.8 142.5,538.5 152.8,541.6C163.1,544.7 173.3,547.9 183.5,551.1C193.8,554.3 204.0,557.6 214.2,560.8C224.4,564.1 234.6,567.4 244.8,570.7C255.0,574.0 265.2,577.3 275.4,580.7C285.6,584.0 295.8,587.4 305.9,590.8C316.1,594.1 326.3,597.5 336.5,600.9C346.6,604.2 361.9,609.3 367.0,611.0M148.3,570.5C153.0,570.9 167.3,572.0 176.7,573.1C186.2,574.2 195.5,575.6 204.9,577.1C214.2,578.6 223.5,580.4 232.7,582.3C242.0,584.1 251.2,586.2 260.4,588.4C269.6,590.5 278.8,592.9 287.9,595.2C297.1,597.6 306.2,600.1 315.3,602.6C324.5,605.1 333.6,607.7 342.7,610.3C351.8,612.8 365.4,616.7 370.0,618.0M168.0,600.0C172.3,599.9 185.1,599.5 193.6,599.6C202.1,599.7 210.6,600.1 219.0,600.6C227.5,601.2 235.9,602.0 244.3,602.9C252.7,603.8 261.1,604.9 269.5,606.0C277.8,607.2 286.2,608.6 294.5,610.0C302.9,611.4 311.2,612.9 319.6,614.4C327.9,616.0 336.2,617.6 344.5,619.2C352.9,620.8 365.3,623.2 369.5,624.0M202.0,626.3C205.6,625.7 216.2,623.7 223.3,622.8C230.4,621.9 237.5,621.3 244.6,620.9C251.7,620.5 258.8,620.4 265.9,620.5C273.0,620.5 280.1,620.8 287.2,621.2C294.2,621.5 301.3,622.1 308.4,622.7C315.5,623.3 322.5,624.1 329.6,624.9C336.7,625.7 343.7,626.5 350.8,627.4C357.9,628.2 368.5,629.6 372.0,630.0M234.2,644.1C237.1,643.4 245.6,641.0 251.3,639.8C257.1,638.6 262.8,637.7 268.6,636.9C274.3,636.1 280.1,635.5 285.9,635.0C291.7,634.6 297.4,634.3 303.2,634.1C309.0,633.9 314.8,633.8 320.6,633.8C326.5,633.8 332.3,633.9 338.1,634.0C343.9,634.1 349.7,634.3 355.5,634.5C361.4,634.6 370.1,634.9 373.0,635.0M271.0,656.0C273.0,655.2 279.1,652.5 283.2,651.1C287.3,649.6 291.5,648.4 295.6,647.3C299.8,646.2 304.0,645.3 308.2,644.5C312.4,643.7 316.7,643.1 320.9,642.6C325.2,642.0 329.5,641.6 333.7,641.2C338.0,640.8 342.3,640.6 346.6,640.3C350.9,640.0 355.2,639.8 359.6,639.6C363.9,639.4 370.3,639.1 372.5,639.0M298.2,669.8C299.6,668.8 303.7,665.5 306.5,663.7C309.3,661.8 312.2,660.2 315.2,658.6C318.2,657.1 321.2,655.8 324.3,654.5C327.3,653.3 330.4,652.2 333.6,651.2C336.7,650.2 339.9,649.3 343.2,648.5C346.4,647.6 349.6,646.9 352.9,646.1C356.1,645.4 359.4,644.7 362.7,644.0C365.9,643.4 370.9,642.3 372.5,642.0M324.1,680.2C325.0,679.2 327.5,676.2 329.3,674.3C331.0,672.5 332.9,670.7 334.8,669.0C336.8,667.4 338.7,665.8 340.8,664.2C342.8,662.7 344.9,661.2 347.0,659.8C349.1,658.4 351.3,657.1 353.4,655.7C355.6,654.4 357.8,653.1 360.0,651.8C362.2,650.5 364.5,649.3 366.7,648.0C368.9,646.8 372.3,644.9 373.4,644.3M118.8,469.5C122.0,471.0 131.5,475.4 137.8,478.2C144.2,481.1 150.6,483.9 157.0,486.7C163.4,489.5 169.8,492.3 176.2,495.0C182.6,497.7 189.0,500.4 195.5,503.1C201.9,505.7 208.4,508.3 214.9,511.0C221.3,513.6 231.0,517.4 234.3,518.7M124.5,437.8C127.2,439.9 135.1,446.6 140.5,450.7C146.0,454.8 151.5,458.8 157.1,462.6C162.7,466.5 168.4,470.1 174.1,473.7C179.9,477.3 185.7,480.7 191.6,484.1C197.5,487.4 203.4,490.6 209.4,493.8C215.4,497.0 224.4,501.5 227.5,503.0M135.8,411.3C137.9,414.0 143.8,422.4 148.1,427.5C152.4,432.6 157.0,437.4 161.6,442.1C166.2,446.7 171.1,451.1 176.0,455.3C181.0,459.5 186.1,463.5 191.3,467.3C196.5,471.1 201.9,474.8 207.3,478.3C212.7,481.8 221.1,486.8 223.8,488.5M153.9,390.8C155.3,393.8 159.2,403.0 162.3,408.6C165.4,414.2 168.7,419.5 172.3,424.5C175.9,429.6 179.7,434.3 183.8,438.8C187.8,443.3 192.0,447.6 196.4,451.7C200.8,455.7 205.5,459.6 210.2,463.3C214.9,467.0 222.3,472.2 224.8,474.0M173.4,375.7C174.2,378.7 176.1,388.2 178.0,394.0C179.9,399.7 182.2,405.1 184.8,410.3C187.3,415.4 190.3,420.2 193.4,424.8C196.5,429.4 200.0,433.7 203.6,437.8C207.2,442.0 211.1,445.8 215.1,449.6C219.1,453.3 225.6,458.5 227.7,460.3M196.3,366.8C196.5,369.7 196.8,378.7 197.6,384.2C198.5,389.7 199.8,394.9 201.4,399.8C203.0,404.7 205.0,409.3 207.2,413.7C209.5,418.1 212.1,422.2 214.9,426.2C217.7,430.1 220.8,433.9 224.1,437.5C227.3,441.1 232.8,446.1 234.5,447.8M227.6,335.7C227.2,338.6 225.5,347.4 225.2,352.9C224.8,358.4 225.0,363.7 225.5,368.8C226.0,373.9 226.9,378.8 228.2,383.6C229.4,388.3 231.1,392.9 233.0,397.3C234.9,401.8 237.1,406.1 239.5,410.3C241.9,414.5 246.1,420.5 247.5,422.5M224.4,382.4C224.1,384.7 222.6,391.1 222.5,396.0C222.4,400.9 222.9,406.3 224.0,412.0C225.1,417.7 226.7,423.7 229.0,430.0C231.3,436.3 234.5,443.7 238.0,450.0C241.5,456.3 245.7,462.3 250.0,468.0C254.3,473.7 261.7,481.3 264.0,484.0M246.4,396.8C246.2,399.0 245.2,405.1 245.5,410.0C245.8,414.9 246.4,420.3 248.0,426.0C249.6,431.7 252.0,438.0 255.0,444.0C258.0,450.0 261.8,456.3 266.0,462.0C270.2,467.7 277.7,475.3 280.0,478.0M272.5,408.0C272.3,410.0 271.4,415.7 271.5,420.0C271.6,424.3 271.9,429.0 273.0,434.0C274.1,439.0 275.8,445.0 278.0,450.0C280.2,455.0 283.5,459.7 286.0,464.0C288.5,468.3 291.8,474.0 293.0,476.0M271.5,457.6C270.7,455.8 268.2,450.0 266.6,447.0C265.0,444.1 263.1,439.9 262.0,440.0C260.9,440.1 260.5,444.6 260.0,447.9C259.6,451.2 259.3,457.8 259.1,459.8M290.6,450.5C290.0,448.6 288.1,442.5 286.8,439.4C285.6,436.3 284.1,431.9 283.0,432.0C281.9,432.1 281.0,436.5 280.2,439.8C279.4,443.0 278.4,449.4 278.0,451.4M252.4,477.7C251.3,476.1 247.8,470.9 245.8,468.3C243.7,465.7 241.1,461.7 240.0,462.0C238.9,462.3 239.3,466.7 239.4,470.0C239.5,473.3 240.4,480.0 240.6,482.0M183.2,524.4C184.2,524.7 187.3,525.2 189.4,525.9C191.4,526.6 194.5,528.0 195.6,528.4M202.0,554.5C203.1,554.6 206.2,554.9 208.4,555.4C210.5,555.8 213.7,556.9 214.7,557.2M224.6,582.7C225.7,582.7 228.9,582.5 231.1,582.7C233.2,582.8 236.5,583.4 237.6,583.6M247.1,604.3C248.2,604.1 251.4,603.3 253.6,603.1C255.7,602.9 259.0,603.0 260.0,602.9M267.8,625.0C268.8,624.6 272.0,623.3 274.0,622.7C276.1,622.1 279.3,621.6 280.3,621.4M296.0,639.1C297.0,638.5 299.9,636.7 301.8,635.8C303.8,634.8 306.7,633.8 307.7,633.4M222.7,528.2C223.7,528.5 226.8,529.2 228.8,529.9C230.8,530.7 233.9,532.2 234.9,532.6M234.0,547.0C235.0,547.2 238.2,547.7 240.2,548.3C242.3,548.9 245.5,550.2 246.5,550.6M256.5,567.7C257.6,567.8 260.8,568.0 262.9,568.3C265.0,568.7 268.2,569.7 269.3,570.0M279.1,586.5C280.2,586.5 283.4,586.3 285.6,586.5C287.7,586.6 291.0,587.2 292.1,587.4M296.0,599.6C297.1,599.5 300.3,598.9 302.5,598.9C304.7,598.8 307.9,599.1 309.0,599.1M312.9,614.7C314.0,614.4 317.2,613.4 319.3,613.1C321.4,612.7 324.6,612.5 325.7,612.4M329.8,627.8C330.8,627.3 333.9,625.8 335.9,625.1C337.9,624.3 341.0,623.6 342.0,623.4M160.0,497.0C161.0,497.4 164.0,498.3 165.9,499.1C167.9,500.0 170.9,501.8 171.9,502.3M196.0,503.0C197.0,503.4 200.0,504.3 201.9,505.1C203.9,506.0 206.9,507.8 207.9,508.3M236.0,511.0C237.0,511.4 240.0,512.3 241.9,513.1C243.9,514.0 246.9,515.8 247.9,516.3M272.0,532.0C273.0,532.3 276.0,533.1 278.0,533.9C280.0,534.7 283.0,536.4 284.1,536.9M300.0,556.0C301.0,556.3 304.1,556.8 306.2,557.5C308.2,558.2 311.3,559.6 312.4,560.0M318.0,577.0C319.1,577.1 322.2,577.4 324.4,577.9C326.5,578.3 329.7,579.4 330.7,579.7" fill="none" stroke="#0f8f0f" stroke-opacity="0.32" stroke-width="1.2" stroke-linecap="round"/>
<path d="M150.8,515.4C155.8,517.4 170.8,523.3 180.8,527.2C190.8,531.1 200.8,535.1 210.8,539.1C220.8,543.0 230.8,547.0 240.7,551.0C250.7,555.0 260.7,559.0 270.6,563.0C280.6,567.0 290.6,571.0 300.5,575.0C310.5,579.0 325.4,585.0 330.4,587.0M153.1,542.7C158.2,544.3 173.6,549.0 183.8,552.2C194.1,555.4 204.3,558.7 214.5,561.9C224.7,565.2 234.9,568.5 245.1,571.8C255.3,575.1 265.5,578.4 275.7,581.8C285.9,585.1 296.1,588.5 306.2,591.9C316.4,595.2 331.7,600.3 336.8,602.0M177.0,574.2C181.7,574.9 195.8,576.7 205.2,578.2C214.5,579.7 223.8,581.5 233.0,583.4C242.3,585.2 251.5,587.3 260.7,589.5C269.9,591.6 279.1,594.0 288.2,596.3C297.4,598.7 306.5,601.2 315.6,603.7C324.8,606.2 338.4,610.1 343.0,611.4M193.9,600.7C198.1,600.9 210.9,601.2 219.3,601.7C227.8,602.3 236.2,603.1 244.6,604.0C253.0,604.9 261.4,606.0 269.8,607.1C278.1,608.3 286.5,609.7 294.8,611.1C303.2,612.5 311.5,614.0 319.9,615.5C328.2,617.1 340.7,619.5 344.8,620.3M223.6,623.9C227.2,623.6 237.8,622.4 244.9,622.0C252.0,621.6 259.1,621.5 266.2,621.6C273.3,621.6 280.4,621.9 287.5,622.3C294.5,622.6 301.6,623.2 308.7,623.8C315.8,624.4 322.8,625.2 329.9,626.0C337.0,626.8 347.6,628.1 351.1,628.5M251.6,640.9C254.5,640.4 263.1,638.8 268.9,638.0C274.6,637.2 280.4,636.6 286.2,636.1C292.0,635.7 297.7,635.4 303.5,635.2C309.3,635.0 315.1,634.9 320.9,634.9C326.8,634.9 332.6,635.0 338.4,635.1C344.2,635.2 352.9,635.5 355.8,635.6M283.5,652.2C285.6,651.5 291.8,649.5 295.9,648.4C300.1,647.3 304.3,646.4 308.5,645.6C312.7,644.8 317.0,644.2 321.2,643.7C325.5,643.1 329.8,642.7 334.0,642.3C338.3,641.9 342.6,641.7 346.9,641.4C351.2,641.1 357.7,640.8 359.9,640.7M306.8,664.8C308.2,663.9 312.5,661.3 315.5,659.7C318.5,658.2 321.5,656.9 324.6,655.6C327.6,654.4 330.7,653.3 333.9,652.3C337.0,651.3 340.2,650.4 343.5,649.6C346.7,648.7 349.9,648.0 353.2,647.2C356.4,646.5 361.3,645.5 363.0,645.1M329.6,675.4C330.5,674.6 333.2,671.8 335.1,670.1C337.1,668.5 339.0,666.9 341.1,665.3C343.1,663.8 345.2,662.3 347.3,660.9C349.4,659.5 351.6,658.2 353.7,656.8C355.9,655.5 358.1,654.2 360.3,652.9C362.5,651.6 365.9,649.8 367.0,649.1M184.7,525.8C185.6,526.1 188.2,526.9 190.4,527.5C192.5,528.1 196.4,529.3 197.6,529.6M203.5,555.9C204.5,556.1 207.2,556.5 209.4,557.0C211.6,557.4 215.5,558.2 216.7,558.4M226.1,584.1C227.1,584.1 229.8,584.1 232.1,584.3C234.3,584.4 238.3,584.7 239.6,584.8M248.6,605.7C249.6,605.5 252.3,605.0 254.6,604.7C256.8,604.5 260.8,604.2 262.0,604.1M269.3,626.4C270.3,626.1 272.9,624.9 275.0,624.3C277.2,623.7 281.1,622.9 282.3,622.6M297.5,640.5C298.4,640.0 300.8,638.3 302.8,637.4C304.9,636.4 308.5,635.1 309.7,634.6M224.2,529.6C225.1,529.9 227.7,530.8 229.8,531.5C231.9,532.2 235.7,533.5 236.9,533.8M235.5,548.4C236.5,548.6 239.1,549.3 241.2,549.9C243.4,550.5 247.3,551.5 248.5,551.8M258.0,569.1C259.0,569.2 261.7,569.6 263.9,569.9C266.1,570.3 270.1,571.0 271.3,571.2M280.6,587.9C281.6,587.9 284.3,587.9 286.6,588.1C288.8,588.2 292.8,588.5 294.1,588.6M297.5,601.0C298.5,600.9 301.2,600.6 303.5,600.5C305.7,600.4 309.7,600.4 311.0,600.3M314.4,616.1C315.4,615.9 318.1,615.1 320.3,614.7C322.5,614.3 326.5,613.8 327.7,613.6M331.3,629.2C332.2,628.8 334.8,627.5 336.9,626.7C339.0,625.9 342.8,624.9 344.0,624.6M161.5,498.4C162.4,498.8 164.9,499.9 166.9,500.7C169.0,501.6 172.7,503.0 173.9,503.5M197.5,504.4C198.4,504.8 200.9,505.9 202.9,506.7C205.0,507.6 208.7,509.0 209.9,509.5M237.5,512.4C238.4,512.8 240.9,513.9 242.9,514.7C245.0,515.6 248.7,517.0 249.9,517.5M273.5,533.4C274.4,533.8 276.9,534.8 279.0,535.5C281.1,536.3 284.9,537.6 286.1,538.1M301.5,557.4C302.4,557.7 305.0,558.5 307.2,559.1C309.3,559.7 313.2,560.9 314.4,561.2M319.5,578.4C320.5,578.6 323.2,579.0 325.4,579.5C327.6,579.9 331.5,580.7 332.7,580.9" fill="none" stroke="#3cf03c" stroke-opacity="0.5" stroke-width="1.4" stroke-linecap="round"/>
<path d="M300.2,468.6C299.6,470.2 297.7,474.1 296.5,478.0C295.3,481.9 293.7,487.5 293.2,492.0C292.7,496.5 292.8,500.9 293.4,505.1C293.9,509.3 295.3,513.2 296.5,517.0C297.7,520.8 299.0,524.3 300.7,527.6C302.4,530.9 304.4,534.1 306.5,537.0C308.6,539.9 310.7,542.5 313.2,545.2C315.7,547.9 318.6,550.5 321.5,553.0C324.4,555.5 327.6,557.9 330.8,560.2C334.0,562.5 337.2,564.9 340.5,567.0C343.8,569.1 347.6,571.0 350.8,572.8C354.1,574.6 357.1,576.3 360.0,578.0C362.9,579.7 366.0,581.0 368.4,582.8C370.8,584.5 373.5,587.5 374.5,588.5" fill="none" stroke="#0c7a0c" stroke-opacity="0.55" stroke-width="0.9"/>
<path d="M376.0,632.5C377.3,633.3 380.8,636.0 384.0,637.5C387.2,639.0 391.3,640.6 395.3,641.8C399.3,643.0 404.2,644.1 407.8,644.8C411.4,645.5 415.5,645.8 417.0,646.0" fill="none" stroke="#0f8a0f" stroke-width="2.2" stroke-opacity="0.7"/>
<ellipse cx="427.6" cy="637.9" rx="10.6" ry="13.8" fill="url(#knobL)" transform="rotate(8 427.6 637.9)"/>
<ellipse cx="420.2" cy="637.5" rx="2.2" ry="12.6" fill="none" stroke="#0f8f0f" stroke-width="1" stroke-opacity="0.8" transform="rotate(8 420.2 637.5)"/>
<path d="M365.7,583.6C366.6,584.2 369.8,585.9 371.4,587.3C373.0,588.7 374.1,590.5 375.1,592.0C376.1,593.5 376.9,595.5 377.2,596.2" fill="none" stroke="#c8ffc8" stroke-width="1.1" stroke-opacity="0.9"/>
<path d="M336.0,575.5L365.7,583.6M342.0,588.5L368.6,593.2M346.0,600.6L372.3,602.6M349.7,609.6L371.5,611.2M353.0,618.0L373.0,619.0M357.0,626.0L374.0,626.6" fill="none" stroke="#4cf04c" stroke-width="1" stroke-opacity="0.7"/>
<path d="M336.0,575.5L365.7,583.6M342.0,588.5L368.6,593.2M346.0,600.6L372.3,602.6M349.7,609.6L371.5,611.2M353.0,618.0L373.0,619.0M357.0,626.0L374.0,626.6" fill="none" stroke="#0d7a0d" stroke-width="0.8" stroke-opacity="0.55" transform="translate(0,-1.1)" stroke-dasharray="2 1.5"/>
<path d="M384.0,621.9L389.0,640.5M391.0,622.7L396.0,641.6M398.0,623.6L403.0,642.7M405.0,624.4L410.0,643.9M412.0,625.3L417.0,645.0" fill="none" stroke="#0f8a0f" stroke-width="0.9" stroke-opacity="0.55"/>
<path d="M383.4,643.4C384.7,643.3 388.1,642.6 391.0,642.6C393.9,642.6 397.5,642.9 401.0,643.6C404.5,644.3 411.1,646.0 412.2,646.8C413.3,647.6 410.0,648.1 407.8,648.4C405.6,648.7 402.2,649.1 399.1,648.8C396.0,648.5 391.6,647.5 389.0,646.6C386.4,645.7 384.3,643.9 383.4,643.4Z" fill="#2ad82a"/>
<clipPath id="clipR"><path d="M484.6,297.6C487.1,297.8 494.7,298.1 499.8,298.6C505.0,299.1 510.2,299.8 515.4,300.7C520.6,301.5 525.7,302.5 530.8,303.6C536.0,304.7 541.8,306.1 546.2,307.3C550.7,308.5 553.8,309.6 557.7,310.8C561.5,312.0 565.3,312.9 569.1,314.5C573.0,316.0 577.0,318.1 580.5,320.1C584.0,322.1 586.8,324.1 590.1,326.5C593.4,328.8 597.4,332.0 600.3,334.2C603.3,336.5 605.2,337.9 607.8,340.1C610.5,342.3 614.1,345.7 616.2,347.6C618.3,349.4 618.4,349.2 620.4,351.1C622.4,353.0 625.6,356.1 628.2,359.1C630.8,362.0 633.6,365.6 636.1,368.8C638.5,372.1 640.9,375.3 643.0,378.5C645.1,381.7 647.0,385.1 648.5,388.1C649.9,391.0 650.6,393.1 651.7,396.0C652.8,398.8 654.0,401.9 655.0,405.1C656.0,408.3 657.4,413.4 657.8,415.1C657.5,413.4 656.4,408.1 655.5,404.9C654.5,401.7 653.3,398.6 652.2,395.7C651.2,392.9 650.5,390.7 649.0,387.8C647.6,384.8 645.7,381.3 643.6,378.1C641.5,374.9 639.1,371.7 636.6,368.4C634.2,365.1 631.4,361.6 628.8,358.5C626.2,355.5 623.1,352.4 621.2,350.4C619.3,348.3 619.5,348.5 617.3,346.4C615.1,344.2 610.8,340.1 608.1,337.5C605.3,335.0 603.5,333.7 600.6,331.2C597.7,328.8 593.7,325.6 590.4,323.1C587.1,320.5 584.3,318.4 580.8,316.1C577.4,313.7 573.4,311.1 569.6,309.0C565.9,306.9 562.1,305.3 558.3,303.4C554.6,301.6 550.8,299.8 547.1,297.9C543.3,296.0 539.3,294.1 535.8,292.0C532.2,289.9 527.4,286.4 525.8,285.3C528.2,285.6 535.2,286.3 540.1,287.1C545.1,287.8 550.5,288.9 555.6,290.0C560.7,291.2 566.8,292.8 571.0,294.1C575.1,295.4 577.4,296.3 580.7,297.7C583.9,299.0 587.3,300.5 590.3,302.0C593.3,303.5 595.6,304.9 598.9,306.7C602.2,308.6 606.7,311.3 610.1,313.2C613.5,315.1 615.8,315.9 619.2,318.1C622.7,320.3 627.5,324.0 630.9,326.6C634.3,329.3 636.6,331.1 639.7,333.8C642.7,336.5 646.0,339.5 649.1,342.9C652.2,346.2 655.6,350.6 658.3,354.1C661.0,357.6 663.3,360.5 665.4,363.7C667.5,366.9 669.2,370.2 670.9,373.2C672.6,376.3 674.1,379.2 675.6,382.0C677.0,384.8 678.6,387.5 679.7,390.0C680.8,392.5 681.4,394.6 682.3,397.1C683.1,399.5 684.5,403.6 684.9,404.9C684.5,403.5 683.5,399.4 682.7,396.9C682.0,394.4 681.4,392.3 680.3,389.7C679.3,387.2 677.7,384.4 676.3,381.6C674.9,378.8 673.4,375.9 671.7,372.8C670.0,369.7 668.4,366.4 666.3,363.1C664.2,359.9 662.0,356.9 659.3,353.3C656.6,349.8 653.2,345.3 650.1,341.9C647.0,338.4 643.7,335.4 640.7,332.6C637.7,329.9 635.3,328.0 632.0,325.3C628.7,322.6 624.0,318.7 620.8,316.2C617.5,313.7 615.5,312.4 612.6,310.5C609.6,308.5 606.4,306.5 603.0,304.3C599.6,302.1 595.6,299.5 591.9,297.1C588.2,294.6 584.5,292.1 580.8,289.6C577.0,287.0 571.3,282.9 569.4,281.6C571.4,282.0 577.4,283.0 581.3,283.9C585.2,284.7 589.0,285.6 592.9,286.7C596.7,287.8 600.4,289.2 604.2,290.6C608.0,292.0 611.9,293.2 615.7,294.9C619.4,296.7 623.2,298.8 627.0,300.9C630.7,303.0 634.5,305.4 638.1,307.6C641.6,309.7 645.1,311.6 648.3,313.8C651.6,315.9 654.6,318.0 657.8,320.4C661.0,322.8 664.1,325.3 667.4,328.2C670.7,331.1 674.4,334.3 677.7,337.8C680.9,341.3 684.1,345.3 686.9,349.0C689.7,352.8 692.3,356.5 694.6,360.2C696.9,363.9 699.0,367.6 700.8,371.3C702.6,375.0 704.2,378.9 705.4,382.3C706.7,385.6 707.7,389.8 708.1,391.3C707.8,389.7 707.3,385.4 706.3,381.9C705.2,378.5 703.6,374.5 701.9,370.7C700.1,367.0 698.1,363.2 695.9,359.4C693.6,355.6 691.1,351.7 688.4,347.9C685.6,344.1 682.4,340.0 679.2,336.4C676.0,332.8 672.3,329.5 669.1,326.4C665.9,323.3 663.2,320.8 660.0,317.9C656.7,315.0 652.9,311.8 649.8,309.0C646.6,306.3 643.8,304.0 641.0,301.4C638.3,298.8 634.4,294.8 633.1,293.5C634.8,294.0 639.8,295.4 643.0,296.8C646.3,298.1 648.1,298.9 652.7,301.5C657.3,304.1 665.5,309.0 670.6,312.5C675.7,316.0 679.4,319.0 683.4,322.4C687.5,325.7 691.6,329.6 695.0,332.6C698.5,335.7 702.0,338.7 704.3,340.7C706.7,342.7 708.3,343.9 709.1,344.6L709.7,330.4C711.3,332.1 716.4,336.7 719.5,340.5C722.6,344.4 725.8,348.9 728.3,353.4C730.9,357.9 733.1,363.5 734.6,367.4C736.1,371.3 737.1,375.2 737.6,376.8C737.9,374.2 738.6,366.3 739.7,361.4C740.7,356.5 743.1,349.9 743.8,347.5C745.2,349.8 749.7,356.4 752.1,361.3C754.4,366.1 756.7,372.5 757.9,376.7C759.2,380.9 759.4,384.9 759.7,386.5C760.3,384.7 762.1,379.9 763.8,376.0C765.4,372.2 768.6,365.5 769.5,363.4C770.4,365.6 773.7,372.2 775.1,376.4C776.4,380.7 777.2,384.7 777.7,389.1C778.1,393.4 777.8,400.1 777.8,402.3C779.0,400.8 782.4,396.6 784.8,393.1C787.2,389.6 791.0,383.2 792.2,381.2C792.6,383.4 794.2,390.3 794.8,394.7C795.3,399.1 795.6,402.6 795.5,407.3C795.3,412.1 794.3,420.7 794.0,423.4C795.1,422.2 797.5,419.5 800.4,416.2C803.3,413.0 809.6,406.0 811.5,403.9C811.6,405.4 812.2,409.6 812.0,413.0C811.8,416.3 811.2,420.1 810.3,424.2C809.4,428.4 807.8,433.5 806.6,437.8C805.3,442.1 803.6,448.2 803.0,450.3C805.1,448.9 811.8,445.0 815.6,441.9C819.4,438.9 824.0,433.7 825.7,432.1C824.8,435.4 822.2,445.7 820.3,451.9C818.5,458.1 816.7,464.4 814.5,469.2C812.3,474.1 808.6,478.7 807.1,480.9C805.7,483.0 806.0,481.9 805.8,482.1C806.5,481.7 807.3,481.3 809.7,479.8C812.2,478.3 816.7,475.3 820.3,473.3C824.0,471.2 829.7,468.3 831.6,467.4C830.6,470.0 828.2,478.3 825.7,483.5C823.3,488.6 820.0,493.8 816.9,498.3C813.8,502.8 809.6,507.6 807.0,510.4C804.4,513.3 802.1,514.4 801.2,515.2C802.5,514.6 806.0,513.5 809.4,511.7C812.8,510.0 817.4,506.7 821.3,504.6C825.3,502.6 831.3,500.3 833.3,499.5C832.2,501.8 829.2,509.3 826.9,513.7C824.5,518.1 822.1,522.0 819.5,525.9C816.8,529.8 813.9,534.1 811.0,536.9C808.0,539.7 803.9,541.6 801.6,542.9C799.3,544.2 797.8,544.4 797.0,544.7C797.8,544.5 798.7,544.2 801.6,543.3C804.5,542.4 810.5,540.7 814.5,539.4C818.4,538.0 823.7,535.9 825.5,535.2C824.0,537.3 819.6,544.0 816.2,548.2C812.8,552.4 808.9,556.7 805.1,560.3C801.2,564.0 797.1,567.1 792.9,569.9C788.7,572.7 784.0,574.9 779.8,576.9C775.5,578.9 769.5,581.1 767.4,581.9C769.4,581.6 775.7,580.5 779.5,580.1C783.2,579.8 788.1,579.9 789.8,579.8C788.4,581.4 784.2,586.6 781.1,589.6C778.1,592.6 774.9,595.4 771.6,598.0C768.2,600.6 764.4,603.2 760.9,605.2C757.4,607.2 753.1,608.9 750.5,609.8C747.8,610.7 746.0,610.5 745.1,610.6C747.1,610.6 753.1,610.2 756.8,610.4C760.5,610.7 765.5,612.0 767.3,612.3C765.4,614.0 759.9,619.5 755.8,622.3C751.7,625.2 747.0,627.4 742.6,629.4C738.3,631.3 733.9,632.8 729.6,633.9C725.3,635.0 720.4,635.6 716.9,635.9C713.4,636.2 710.2,635.7 708.8,635.6C710.8,636.2 716.9,637.9 720.4,639.3C723.9,640.7 728.4,643.2 730.0,644.0C728.3,644.8 723.5,647.3 719.6,648.6C715.7,650.0 710.9,651.2 706.7,651.9C702.4,652.6 698.3,652.6 694.1,652.7C689.9,652.8 684.8,652.3 681.6,652.3C678.4,652.2 676.2,652.2 675.1,652.2C676.5,653.3 680.9,656.3 683.5,658.6C686.2,661.0 689.7,665.1 690.9,666.4C689.2,666.7 684.1,667.7 680.2,667.8C676.3,668.0 671.8,667.6 667.6,667.4C663.5,667.1 659.3,666.9 655.2,666.3C651.1,665.7 645.9,664.5 642.9,663.9C639.9,663.4 638.2,662.9 637.3,662.7C638.7,664.5 643.1,669.9 645.7,673.5C648.4,677.0 651.8,682.1 653.0,683.9C651.1,683.8 645.2,683.9 641.2,683.4C637.1,683.0 633.0,681.9 628.8,681.1C624.7,680.2 619.8,679.0 616.5,678.1C613.2,677.2 610.2,675.9 608.9,675.5C609.7,677.3 612.2,682.6 613.6,686.1C614.9,689.6 616.4,694.7 617.0,696.4C614.8,696.0 608.3,695.0 604.2,693.9C600.0,692.8 595.6,691.2 591.9,689.7C588.2,688.2 583.8,685.7 582.1,684.9C582.7,686.4 584.5,690.9 585.3,693.9C586.2,696.8 586.8,701.2 587.1,702.7C585.0,702.0 578.8,700.3 574.8,698.5C570.8,696.7 566.6,694.4 562.9,691.8C559.2,689.1 555.6,686.0 552.4,682.6C549.1,679.1 545.8,674.8 543.4,671.0C541.0,667.2 539.4,663.3 538.1,659.5C536.8,655.7 535.9,651.6 535.4,648.1C534.9,644.5 534.9,640.3 535.0,638.0C535.1,635.7 535.9,634.9 536.1,634.3C534.6,635.1 531.0,637.4 527.4,639.0C523.8,640.5 518.8,642.4 514.5,643.6C510.2,644.8 505.3,645.6 501.7,646.2C498.1,646.8 494.3,647.0 492.8,647.1C492.3,647.8 491.0,650.3 489.6,651.3C488.2,652.3 486.3,652.8 484.4,652.9C482.5,653.0 479.8,652.9 478.0,652.1C476.1,651.3 474.4,649.9 473.3,648.2C472.2,646.4 471.5,643.9 471.3,641.6C471.1,639.3 471.4,636.8 472.1,634.6C472.8,632.5 474.1,630.3 475.5,628.7C477.0,627.2 479.0,626.1 480.8,625.5C482.6,624.9 484.7,625.0 486.4,625.1C488.1,625.3 490.1,626.1 490.9,626.3C491.9,626.2 494.1,626.4 497.2,625.9C500.4,625.4 505.7,624.7 510.0,623.3C514.3,621.9 519.4,619.4 523.1,617.5C526.9,615.5 530.1,613.9 532.4,611.6C534.7,609.3 536.1,604.8 536.9,603.5C536.7,602.5 535.3,599.9 535.5,597.9C535.7,595.9 537.0,593.9 538.0,591.5C539.0,589.1 541.0,584.9 541.6,583.6C540.7,582.3 537.9,578.6 536.3,575.9C534.8,573.2 532.9,569.8 532.0,567.2C531.1,564.6 530.4,562.3 530.8,560.3C531.3,558.2 532.9,555.7 534.7,554.8C536.5,553.9 538.9,554.9 541.7,554.6C544.6,554.4 548.3,554.2 551.9,553.0C555.5,551.9 559.8,549.8 563.4,547.8C566.9,545.9 569.5,544.2 573.2,541.2C576.9,538.2 581.8,534.1 585.5,529.7C589.3,525.4 592.9,520.0 595.9,515.1C598.8,510.2 601.2,505.2 603.2,500.2C605.2,495.3 606.7,490.0 608.0,485.4C609.4,480.8 610.4,475.5 611.3,472.6C612.1,469.6 612.9,468.4 613.2,467.5C614.2,468.2 617.4,470.1 619.3,471.3C621.2,472.4 623.9,474.0 624.8,474.6C625.3,473.2 627.0,469.1 627.8,466.1C628.5,463.0 628.9,459.9 629.3,456.1C629.6,452.3 629.9,447.1 629.6,443.1C629.3,439.1 628.7,436.6 627.6,432.0C626.5,427.5 624.9,421.0 623.2,415.8C621.5,410.6 619.3,405.2 617.5,400.8C615.6,396.4 614.5,393.2 612.2,389.3C609.9,385.3 606.9,381.7 603.6,377.0C600.3,372.3 596.0,365.5 592.3,361.1C588.6,356.7 585.1,353.6 581.5,350.5C577.8,347.3 574.1,344.7 570.4,342.2C566.7,339.6 562.6,337.2 559.5,335.3C556.4,333.5 555.1,332.8 551.9,331.1C548.8,329.4 544.4,327.0 540.7,325.1C536.9,323.3 533.2,321.7 529.4,320.0C525.6,318.3 521.8,316.6 518.0,314.9C514.3,313.2 510.5,311.6 506.8,309.8C503.0,307.9 499.2,305.9 495.5,303.8C491.8,301.8 486.4,298.7 484.6,297.6Z"/></clipPath>
<path d="M484.6,297.6C487.1,297.8 494.7,298.1 499.8,298.6C505.0,299.1 510.2,299.8 515.4,300.7C520.6,301.5 525.7,302.5 530.8,303.6C536.0,304.7 541.8,306.1 546.2,307.3C550.7,308.5 553.8,309.6 557.7,310.8C561.5,312.0 565.3,312.9 569.1,314.5C573.0,316.0 577.0,318.1 580.5,320.1C584.0,322.1 586.8,324.1 590.1,326.5C593.4,328.8 597.4,332.0 600.3,334.2C603.3,336.5 605.2,337.9 607.8,340.1C610.5,342.3 614.1,345.7 616.2,347.6C618.3,349.4 618.4,349.2 620.4,351.1C622.4,353.0 625.6,356.1 628.2,359.1C630.8,362.0 633.6,365.6 636.1,368.8C638.5,372.1 640.9,375.3 643.0,378.5C645.1,381.7 647.0,385.1 648.5,388.1C649.9,391.0 650.6,393.1 651.7,396.0C652.8,398.8 654.0,401.9 655.0,405.1C656.0,408.3 657.4,413.4 657.8,415.1C657.5,413.4 656.4,408.1 655.5,404.9C654.5,401.7 653.3,398.6 652.2,395.7C651.2,392.9 650.5,390.7 649.0,387.8C647.6,384.8 645.7,381.3 643.6,378.1C641.5,374.9 639.1,371.7 636.6,368.4C634.2,365.1 631.4,361.6 628.8,358.5C626.2,355.5 623.1,352.4 621.2,350.4C619.3,348.3 619.5,348.5 617.3,346.4C615.1,344.2 610.8,340.1 608.1,337.5C605.3,335.0 603.5,333.7 600.6,331.2C597.7,328.8 593.7,325.6 590.4,323.1C587.1,320.5 584.3,318.4 580.8,316.1C577.4,313.7 573.4,311.1 569.6,309.0C565.9,306.9 562.1,305.3 558.3,303.4C554.6,301.6 550.8,299.8 547.1,297.9C543.3,296.0 539.3,294.1 535.8,292.0C532.2,289.9 527.4,286.4 525.8,285.3C528.2,285.6 535.2,286.3 540.1,287.1C545.1,287.8 550.5,288.9 555.6,290.0C560.7,291.2 566.8,292.8 571.0,294.1C575.1,295.4 577.4,296.3 580.7,297.7C583.9,299.0 587.3,300.5 590.3,302.0C593.3,303.5 595.6,304.9 598.9,306.7C602.2,308.6 606.7,311.3 610.1,313.2C613.5,315.1 615.8,315.9 619.2,318.1C622.7,320.3 627.5,324.0 630.9,326.6C634.3,329.3 636.6,331.1 639.7,333.8C642.7,336.5 646.0,339.5 649.1,342.9C652.2,346.2 655.6,350.6 658.3,354.1C661.0,357.6 663.3,360.5 665.4,363.7C667.5,366.9 669.2,370.2 670.9,373.2C672.6,376.3 674.1,379.2 675.6,382.0C677.0,384.8 678.6,387.5 679.7,390.0C680.8,392.5 681.4,394.6 682.3,397.1C683.1,399.5 684.5,403.6 684.9,404.9C684.5,403.5 683.5,399.4 682.7,396.9C682.0,394.4 681.4,392.3 680.3,389.7C679.3,387.2 677.7,384.4 676.3,381.6C674.9,378.8 673.4,375.9 671.7,372.8C670.0,369.7 668.4,366.4 666.3,363.1C664.2,359.9 662.0,356.9 659.3,353.3C656.6,349.8 653.2,345.3 650.1,341.9C647.0,338.4 643.7,335.4 640.7,332.6C637.7,329.9 635.3,328.0 632.0,325.3C628.7,322.6 624.0,318.7 620.8,316.2C617.5,313.7 615.5,312.4 612.6,310.5C609.6,308.5 606.4,306.5 603.0,304.3C599.6,302.1 595.6,299.5 591.9,297.1C588.2,294.6 584.5,292.1 580.8,289.6C577.0,287.0 571.3,282.9 569.4,281.6C571.4,282.0 577.4,283.0 581.3,283.9C585.2,284.7 589.0,285.6 592.9,286.7C596.7,287.8 600.4,289.2 604.2,290.6C608.0,292.0 611.9,293.2 615.7,294.9C619.4,296.7 623.2,298.8 627.0,300.9C630.7,303.0 634.5,305.4 638.1,307.6C641.6,309.7 645.1,311.6 648.3,313.8C651.6,315.9 654.6,318.0 657.8,320.4C661.0,322.8 664.1,325.3 667.4,328.2C670.7,331.1 674.4,334.3 677.7,337.8C680.9,341.3 684.1,345.3 686.9,349.0C689.7,352.8 692.3,356.5 694.6,360.2C696.9,363.9 699.0,367.6 700.8,371.3C702.6,375.0 704.2,378.9 705.4,382.3C706.7,385.6 707.7,389.8 708.1,391.3C707.8,389.7 707.3,385.4 706.3,381.9C705.2,378.5 703.6,374.5 701.9,370.7C700.1,367.0 698.1,363.2 695.9,359.4C693.6,355.6 691.1,351.7 688.4,347.9C685.6,344.1 682.4,340.0 679.2,336.4C676.0,332.8 672.3,329.5 669.1,326.4C665.9,323.3 663.2,320.8 660.0,317.9C656.7,315.0 652.9,311.8 649.8,309.0C646.6,306.3 643.8,304.0 641.0,301.4C638.3,298.8 634.4,294.8 633.1,293.5C634.8,294.0 639.8,295.4 643.0,296.8C646.3,298.1 648.1,298.9 652.7,301.5C657.3,304.1 665.5,309.0 670.6,312.5C675.7,316.0 679.4,319.0 683.4,322.4C687.5,325.7 691.6,329.6 695.0,332.6C698.5,335.7 702.0,338.7 704.3,340.7C706.7,342.7 708.3,343.9 709.1,344.6L709.7,330.4C711.3,332.1 716.4,336.7 719.5,340.5C722.6,344.4 725.8,348.9 728.3,353.4C730.9,357.9 733.1,363.5 734.6,367.4C736.1,371.3 737.1,375.2 737.6,376.8C737.9,374.2 738.6,366.3 739.7,361.4C740.7,356.5 743.1,349.9 743.8,347.5C745.2,349.8 749.7,356.4 752.1,361.3C754.4,366.1 756.7,372.5 757.9,376.7C759.2,380.9 759.4,384.9 759.7,386.5C760.3,384.7 762.1,379.9 763.8,376.0C765.4,372.2 768.6,365.5 769.5,363.4C770.4,365.6 773.7,372.2 775.1,376.4C776.4,380.7 777.2,384.7 777.7,389.1C778.1,393.4 777.8,400.1 777.8,402.3C779.0,400.8 782.4,396.6 784.8,393.1C787.2,389.6 791.0,383.2 792.2,381.2C792.6,383.4 794.2,390.3 794.8,394.7C795.3,399.1 795.6,402.6 795.5,407.3C795.3,412.1 794.3,420.7 794.0,423.4C795.1,422.2 797.5,419.5 800.4,416.2C803.3,413.0 809.6,406.0 811.5,403.9C811.6,405.4 812.2,409.6 812.0,413.0C811.8,416.3 811.2,420.1 810.3,424.2C809.4,428.4 807.8,433.5 806.6,437.8C805.3,442.1 803.6,448.2 803.0,450.3C805.1,448.9 811.8,445.0 815.6,441.9C819.4,438.9 824.0,433.7 825.7,432.1C824.8,435.4 822.2,445.7 820.3,451.9C818.5,458.1 816.7,464.4 814.5,469.2C812.3,474.1 808.6,478.7 807.1,480.9C805.7,483.0 806.0,481.9 805.8,482.1C806.5,481.7 807.3,481.3 809.7,479.8C812.2,478.3 816.7,475.3 820.3,473.3C824.0,471.2 829.7,468.3 831.6,467.4C830.6,470.0 828.2,478.3 825.7,483.5C823.3,488.6 820.0,493.8 816.9,498.3C813.8,502.8 809.6,507.6 807.0,510.4C804.4,513.3 802.1,514.4 801.2,515.2C802.5,514.6 806.0,513.5 809.4,511.7C812.8,510.0 817.4,506.7 821.3,504.6C825.3,502.6 831.3,500.3 833.3,499.5C832.2,501.8 829.2,509.3 826.9,513.7C824.5,518.1 822.1,522.0 819.5,525.9C816.8,529.8 813.9,534.1 811.0,536.9C808.0,539.7 803.9,541.6 801.6,542.9C799.3,544.2 797.8,544.4 797.0,544.7C797.8,544.5 798.7,544.2 801.6,543.3C804.5,542.4 810.5,540.7 814.5,539.4C818.4,538.0 823.7,535.9 825.5,535.2C824.0,537.3 819.6,544.0 816.2,548.2C812.8,552.4 808.9,556.7 805.1,560.3C801.2,564.0 797.1,567.1 792.9,569.9C788.7,572.7 784.0,574.9 779.8,576.9C775.5,578.9 769.5,581.1 767.4,581.9C769.4,581.6 775.7,580.5 779.5,580.1C783.2,579.8 788.1,579.9 789.8,579.8C788.4,581.4 784.2,586.6 781.1,589.6C778.1,592.6 774.9,595.4 771.6,598.0C768.2,600.6 764.4,603.2 760.9,605.2C757.4,607.2 753.1,608.9 750.5,609.8C747.8,610.7 746.0,610.5 745.1,610.6C747.1,610.6 753.1,610.2 756.8,610.4C760.5,610.7 765.5,612.0 767.3,612.3C765.4,614.0 759.9,619.5 755.8,622.3C751.7,625.2 747.0,627.4 742.6,629.4C738.3,631.3 733.9,632.8 729.6,633.9C725.3,635.0 720.4,635.6 716.9,635.9C713.4,636.2 710.2,635.7 708.8,635.6C710.8,636.2 716.9,637.9 720.4,639.3C723.9,640.7 728.4,643.2 730.0,644.0C728.3,644.8 723.5,647.3 719.6,648.6C715.7,650.0 710.9,651.2 706.7,651.9C702.4,652.6 698.3,652.6 694.1,652.7C689.9,652.8 684.8,652.3 681.6,652.3C678.4,652.2 676.2,652.2 675.1,652.2C676.5,653.3 680.9,656.3 683.5,658.6C686.2,661.0 689.7,665.1 690.9,666.4C689.2,666.7 684.1,667.7 680.2,667.8C676.3,668.0 671.8,667.6 667.6,667.4C663.5,667.1 659.3,666.9 655.2,666.3C651.1,665.7 645.9,664.5 642.9,663.9C639.9,663.4 638.2,662.9 637.3,662.7C638.7,664.5 643.1,669.9 645.7,673.5C648.4,677.0 651.8,682.1 653.0,683.9C651.1,683.8 645.2,683.9 641.2,683.4C637.1,683.0 633.0,681.9 628.8,681.1C624.7,680.2 619.8,679.0 616.5,678.1C613.2,677.2 610.2,675.9 608.9,675.5C609.7,677.3 612.2,682.6 613.6,686.1C614.9,689.6 616.4,694.7 617.0,696.4C614.8,696.0 608.3,695.0 604.2,693.9C600.0,692.8 595.6,691.2 591.9,689.7C588.2,688.2 583.8,685.7 582.1,684.9C582.7,686.4 584.5,690.9 585.3,693.9C586.2,696.8 586.8,701.2 587.1,702.7C585.0,702.0 578.8,700.3 574.8,698.5C570.8,696.7 566.6,694.4 562.9,691.8C559.2,689.1 555.6,686.0 552.4,682.6C549.1,679.1 545.8,674.8 543.4,671.0C541.0,667.2 539.4,663.3 538.1,659.5C536.8,655.7 535.9,651.6 535.4,648.1C534.9,644.5 534.9,640.3 535.0,638.0C535.1,635.7 535.9,634.9 536.1,634.3C534.6,635.1 531.0,637.4 527.4,639.0C523.8,640.5 518.8,642.4 514.5,643.6C510.2,644.8 505.3,645.6 501.7,646.2C498.1,646.8 494.3,647.0 492.8,647.1C492.3,647.8 491.0,650.3 489.6,651.3C488.2,652.3 486.3,652.8 484.4,652.9C482.5,653.0 479.8,652.9 478.0,652.1C476.1,651.3 474.4,649.9 473.3,648.2C472.2,646.4 471.5,643.9 471.3,641.6C471.1,639.3 471.4,636.8 472.1,634.6C472.8,632.5 474.1,630.3 475.5,628.7C477.0,627.2 479.0,626.1 480.8,625.5C482.6,624.9 484.7,625.0 486.4,625.1C488.1,625.3 490.1,626.1 490.9,626.3C491.9,626.2 494.1,626.4 497.2,625.9C500.4,625.4 505.7,624.7 510.0,623.3C514.3,621.9 519.4,619.4 523.1,617.5C526.9,615.5 530.1,613.9 532.4,611.6C534.7,609.3 536.1,604.8 536.9,603.5C536.7,602.5 535.3,599.9 535.5,597.9C535.7,595.9 537.0,593.9 538.0,591.5C539.0,589.1 541.0,584.9 541.6,583.6C540.7,582.3 537.9,578.6 536.3,575.9C534.8,573.2 532.9,569.8 532.0,567.2C531.1,564.6 530.4,562.3 530.8,560.3C531.3,558.2 532.9,555.7 534.7,554.8C536.5,553.9 538.9,554.9 541.7,554.6C544.6,554.4 548.3,554.2 551.9,553.0C555.5,551.9 559.8,549.8 563.4,547.8C566.9,545.9 569.5,544.2 573.2,541.2C576.9,538.2 581.8,534.1 585.5,529.7C589.3,525.4 592.9,520.0 595.9,515.1C598.8,510.2 601.2,505.2 603.2,500.2C605.2,495.3 606.7,490.0 608.0,485.4C609.4,480.8 610.4,475.5 611.3,472.6C612.1,469.6 612.9,468.4 613.2,467.5C614.2,468.2 617.4,470.1 619.3,471.3C621.2,472.4 623.9,474.0 624.8,474.6C625.3,473.2 627.0,469.1 627.8,466.1C628.5,463.0 628.9,459.9 629.3,456.1C629.6,452.3 629.9,447.1 629.6,443.1C629.3,439.1 628.7,436.6 627.6,432.0C626.5,427.5 624.9,421.0 623.2,415.8C621.5,410.6 619.3,405.2 617.5,400.8C615.6,396.4 614.5,393.2 612.2,389.3C609.9,385.3 606.9,381.7 603.6,377.0C600.3,372.3 596.0,365.5 592.3,361.1C588.6,356.7 585.1,353.6 581.5,350.5C577.8,347.3 574.1,344.7 570.4,342.2C566.7,339.6 562.6,337.2 559.5,335.3C556.4,333.5 555.1,332.8 551.9,331.1C548.8,329.4 544.4,327.0 540.7,325.1C536.9,323.3 533.2,321.7 529.4,320.0C525.6,318.3 521.8,316.6 518.0,314.9C514.3,313.2 510.5,311.6 506.8,309.8C503.0,307.9 499.2,305.9 495.5,303.8C491.8,301.8 486.4,298.7 484.6,297.6Z" fill="#1ac81a"/>
<g clip-path="url(#clipR)"><path d="M801.2,515.2C796.0,517.0 780.5,522.2 770.1,525.7C759.8,529.3 749.5,532.8 739.2,536.4C728.8,539.9 718.5,543.5 708.2,547.1C697.9,550.7 687.6,554.3 677.2,557.9C666.9,561.5 656.6,565.2 646.3,568.8C636.0,572.4 625.7,576.1 615.4,579.7C605.1,583.3 594.8,587.0 584.5,590.6C574.2,594.3 558.7,599.7 553.6,601.6M797.0,544.7C791.8,546.1 776.0,550.1 765.5,552.9C755.0,555.6 744.4,558.4 733.9,561.2C723.4,564.1 713.0,566.9 702.5,569.8C692.0,572.7 681.5,575.6 671.0,578.5C660.5,581.5 650.1,584.4 639.6,587.4C629.1,590.3 618.7,593.3 608.2,596.3C597.8,599.3 587.3,602.3 576.8,605.3C566.4,608.3 550.7,612.8 545.4,614.3M767.4,581.9C762.6,582.1 748.3,582.7 738.8,583.4C729.3,584.2 719.8,585.2 710.3,586.4C700.9,587.6 691.5,589.0 682.1,590.5C672.6,592.1 663.3,593.8 653.9,595.6C644.5,597.4 635.1,599.4 625.8,601.5C616.4,603.5 607.1,605.6 597.8,607.8C588.4,610.0 579.1,612.2 569.8,614.4C560.5,616.7 546.5,620.0 541.8,621.2M745.1,610.6C740.8,610.4 728.1,609.5 719.6,609.3C711.1,609.1 702.6,609.2 694.1,609.4C685.6,609.6 677.2,610.1 668.7,610.7C660.2,611.3 651.7,612.0 643.3,612.9C634.8,613.8 626.3,614.8 617.9,615.9C609.4,617.0 601.0,618.2 592.5,619.4C584.1,620.7 575.6,622.0 567.2,623.3C558.7,624.6 546.0,626.5 541.8,627.2M708.8,635.6C705.3,634.9 694.8,632.5 687.8,631.3C680.8,630.2 673.8,629.3 666.7,628.7C659.7,628.0 652.6,627.7 645.5,627.5C638.5,627.2 631.4,627.2 624.3,627.4C617.2,627.5 610.0,627.8 602.9,628.1C595.8,628.5 588.7,629.0 581.6,629.5C574.4,630.0 567.3,630.7 560.2,631.2C553.0,631.8 542.3,632.8 538.8,633.1M675.1,652.2C672.3,651.4 664.0,648.7 658.3,647.3C652.7,645.9 647.1,644.8 641.4,643.7C635.7,642.7 630.0,641.9 624.3,641.3C618.6,640.6 612.8,640.1 607.1,639.7C601.3,639.2 595.5,639.0 589.7,638.7C583.9,638.5 578.1,638.4 572.3,638.3C566.5,638.2 560.6,638.2 554.8,638.1C549.0,638.1 540.2,638.0 537.3,638.0M637.3,662.7C635.3,661.8 629.5,659.0 625.5,657.4C621.6,655.8 617.5,654.4 613.5,653.2C609.4,651.9 605.3,650.9 601.2,649.9C597.0,649.0 592.8,648.2 588.6,647.5C584.4,646.8 580.2,646.2 576.0,645.7C571.7,645.1 567.5,644.7 563.2,644.3C558.9,643.9 554.6,643.5 550.3,643.1C546.0,642.8 539.6,642.2 537.5,642.0M608.9,675.5C607.6,674.4 603.8,671.0 601.2,669.1C598.5,667.1 595.7,665.4 592.9,663.7C590.1,662.1 587.2,660.7 584.3,659.3C581.3,658.0 578.3,656.8 575.2,655.7C572.2,654.5 569.0,653.5 565.9,652.6C562.8,651.6 559.6,650.7 556.4,649.9C553.2,649.0 550.0,648.2 546.8,647.4C543.6,646.6 538.8,645.4 537.2,645.0M582.1,684.9C581.4,683.9 579.1,680.8 577.5,678.9C575.9,677.0 574.2,675.2 572.4,673.4C570.6,671.7 568.8,670.0 566.9,668.4C565.0,666.8 563.1,665.3 561.1,663.8C559.1,662.3 557.1,660.8 555.0,659.4C553.0,658.0 550.9,656.7 548.8,655.3C546.7,653.9 544.6,652.6 542.5,651.3C540.3,649.9 537.2,648.0 536.1,647.3M805.8,482.1C802.5,483.5 792.7,487.5 786.1,490.2C779.4,492.8 772.8,495.4 766.2,497.9C759.6,500.5 752.9,503.0 746.3,505.5C739.6,508.0 733.0,510.4 726.3,512.8C719.6,515.2 712.9,517.6 706.2,520.0C699.6,522.4 689.5,525.9 686.2,527.0M803.0,450.3C800.1,452.3 791.6,458.6 785.8,462.6C780.0,466.5 774.1,470.2 768.2,473.9C762.3,477.5 756.2,481.0 750.2,484.3C744.1,487.7 738.0,490.9 731.9,494.0C725.7,497.1 719.5,500.1 713.2,503.1C707.0,506.0 697.5,510.2 694.4,511.6M794.0,423.4C791.7,426.0 785.0,434.1 780.3,439.1C775.5,444.1 770.6,448.7 765.5,453.2C760.5,457.7 755.3,461.8 749.9,465.9C744.6,469.9 739.2,473.6 733.6,477.3C728.1,480.9 722.4,484.4 716.7,487.7C711.0,491.0 702.2,495.7 699.3,497.2M777.8,402.3C776.1,405.2 771.4,414.2 767.8,419.7C764.3,425.2 760.4,430.4 756.4,435.3C752.4,440.2 748.1,444.7 743.7,449.1C739.3,453.5 734.7,457.6 729.9,461.5C725.1,465.4 720.2,469.1 715.1,472.6C710.1,476.2 702.2,481.1 699.6,482.8M759.7,386.5C758.6,389.5 755.8,398.9 753.4,404.6C751.0,410.3 748.2,415.6 745.2,420.6C742.2,425.6 738.9,430.3 735.3,434.8C731.8,439.3 728.0,443.4 724.0,447.4C720.0,451.4 715.8,455.1 711.4,458.7C707.1,462.3 700.1,467.3 697.9,469.0M737.6,376.8C737.1,379.6 736.0,388.6 734.7,394.1C733.4,399.6 731.6,404.6 729.6,409.5C727.5,414.3 725.1,418.8 722.5,423.2C719.9,427.5 716.9,431.5 713.8,435.3C710.6,439.2 707.2,442.8 703.6,446.3C700.0,449.8 694.1,454.6 692.2,456.2M709.1,344.6C709.3,347.4 710.1,356.3 710.0,361.8C709.9,367.4 709.2,372.6 708.3,377.7C707.3,382.8 705.9,387.7 704.3,392.4C702.6,397.1 700.5,401.5 698.3,405.9C696.0,410.3 693.4,414.5 690.6,418.6C687.8,422.7 683.1,428.5 681.6,430.5M708.1,391.3C708.3,393.6 709.2,400.0 708.8,404.9C708.5,409.9 707.5,415.2 705.9,420.9C704.3,426.5 702.2,432.4 699.3,438.7C696.4,444.9 692.6,452.1 688.6,458.3C684.5,464.5 679.8,470.3 675.0,475.8C670.1,481.3 662.1,488.7 659.6,491.3M684.9,404.9C684.9,407.1 685.3,413.2 684.6,418.1C683.9,422.9 682.8,428.4 680.7,434.0C678.6,439.6 675.6,445.8 672.1,451.7C668.6,457.6 664.2,463.7 659.5,469.2C654.9,474.7 646.7,482.1 644.1,484.7M657.8,415.1C657.8,417.1 658.2,422.8 657.8,427.1C657.3,431.4 656.6,436.1 655.0,441.0C653.5,446.0 651.2,451.9 648.6,456.8C646.0,461.7 642.3,466.3 639.4,470.5C636.5,474.7 632.7,480.3 631.3,482.2M654.4,464.7C655.4,462.9 658.4,457.2 660.3,454.3C662.1,451.4 664.4,447.2 665.5,447.4C666.6,447.6 666.5,452.1 666.7,455.4C666.9,458.7 666.6,465.3 666.6,467.3M636.0,456.9C636.8,455.0 639.2,448.9 640.7,445.9C642.3,442.9 644.1,438.6 645.2,438.7C646.3,438.8 646.8,443.3 647.3,446.5C647.9,449.8 648.3,456.2 648.4,458.2M671.7,485.4C673.0,483.9 676.9,478.8 679.2,476.3C681.5,473.7 684.5,469.9 685.5,470.2C686.5,470.5 685.7,474.9 685.3,478.2C685.0,481.5 683.5,488.1 683.1,490.1M736.6,534.6C735.6,534.8 732.5,535.3 730.3,535.9C728.2,536.5 725.0,537.8 723.9,538.1M715.2,563.9C714.1,564.0 710.9,564.2 708.8,564.6C706.6,564.9 703.4,565.9 702.3,566.2M690.1,591.3C689.1,591.2 685.8,590.9 683.7,591.0C681.5,591.1 678.2,591.6 677.1,591.7M665.7,612.0C664.7,611.8 661.5,610.9 659.4,610.6C657.3,610.3 654.0,610.2 653.0,610.2M643.2,631.9C642.2,631.5 639.2,630.1 637.2,629.4C635.2,628.7 632.1,628.1 631.1,627.9M613.8,644.9C612.9,644.4 610.2,642.4 608.3,641.4C606.4,640.4 603.6,639.3 602.7,638.8M696.9,536.9C695.8,537.2 692.7,537.8 690.6,538.4C688.5,539.1 685.3,540.5 684.3,540.9M683.9,555.3C682.9,555.5 679.7,555.8 677.6,556.3C675.4,556.9 672.2,558.1 671.1,558.4M659.6,575.1C658.5,575.2 655.3,575.2 653.2,575.5C651.0,575.8 647.7,576.7 646.6,576.9M635.4,593.1C634.3,593.0 631.1,592.7 628.9,592.8C626.7,592.8 623.4,593.4 622.4,593.5M617.3,605.5C616.3,605.4 613.1,604.7 610.9,604.5C608.8,604.4 605.5,604.6 604.4,604.6M599.1,620.0C598.1,619.7 595.0,618.6 592.9,618.1C590.8,617.7 587.6,617.4 586.5,617.2M581.1,632.4C580.1,631.9 577.2,630.3 575.2,629.5C573.3,628.7 570.3,627.9 569.3,627.5M762.2,508.1C761.2,508.4 758.2,509.2 756.1,510.0C754.1,510.8 751.0,512.4 749.9,512.9M725.8,512.7C724.8,513.1 721.7,513.9 719.7,514.7C717.6,515.5 714.5,517.1 713.4,517.6M685.1,519.3C684.1,519.6 681.1,520.4 679.0,521.2C677.0,522.0 673.8,523.6 672.8,524.1M647.3,538.9C646.3,539.2 643.2,539.9 641.1,540.6C639.1,541.4 635.9,542.9 634.9,543.3M617.2,561.8C616.2,562.1 613.0,562.5 610.9,563.1C608.8,563.7 605.6,565.0 604.5,565.4M597.4,582.1C596.3,582.2 593.1,582.4 591.0,582.8C588.8,583.1 585.5,584.1 584.5,584.4" fill="none" stroke="#0a7a0a" stroke-opacity="0.20" stroke-width="3.2" stroke-linecap="round" filter="url(#soft)" transform="translate(0.8,-0.8)"/></g>
<path d="M801.2,515.2C796.0,517.0 780.5,522.2 770.1,525.7C759.8,529.3 749.5,532.8 739.2,536.4C728.8,539.9 718.5,543.5 708.2,547.1C697.9,550.7 687.6,554.3 677.2,557.9C666.9,561.5 656.6,565.2 646.3,568.8C636.0,572.4 625.7,576.1 615.4,579.7C605.1,583.3 594.8,587.0 584.5,590.6C574.2,594.3 558.7,599.7 553.6,601.6M797.0,544.7C791.8,546.1 776.0,550.1 765.5,552.9C755.0,555.6 744.4,558.4 733.9,561.2C723.4,564.1 713.0,566.9 702.5,569.8C692.0,572.7 681.5,575.6 671.0,578.5C660.5,581.5 650.1,584.4 639.6,587.4C629.1,590.3 618.7,593.3 608.2,596.3C597.8,599.3 587.3,602.3 576.8,605.3C566.4,608.3 550.7,612.8 545.4,614.3M767.4,581.9C762.6,582.1 748.3,582.7 738.8,583.4C729.3,584.2 719.8,585.2 710.3,586.4C700.9,587.6 691.5,589.0 682.1,590.5C672.6,592.1 663.3,593.8 653.9,595.6C644.5,597.4 635.1,599.4 625.8,601.5C616.4,603.5 607.1,605.6 597.8,607.8C588.4,610.0 579.1,612.2 569.8,614.4C560.5,616.7 546.5,620.0 541.8,621.2M745.1,610.6C740.8,610.4 728.1,609.5 719.6,609.3C711.1,609.1 702.6,609.2 694.1,609.4C685.6,609.6 677.2,610.1 668.7,610.7C660.2,611.3 651.7,612.0 643.3,612.9C634.8,613.8 626.3,614.8 617.9,615.9C609.4,617.0 601.0,618.2 592.5,619.4C584.1,620.7 575.6,622.0 567.2,623.3C558.7,624.6 546.0,626.5 541.8,627.2M708.8,635.6C705.3,634.9 694.8,632.5 687.8,631.3C680.8,630.2 673.8,629.3 666.7,628.7C659.7,628.0 652.6,627.7 645.5,627.5C638.5,627.2 631.4,627.2 624.3,627.4C617.2,627.5 610.0,627.8 602.9,628.1C595.8,628.5 588.7,629.0 581.6,629.5C574.4,630.0 567.3,630.7 560.2,631.2C553.0,631.8 542.3,632.8 538.8,633.1M675.1,652.2C672.3,651.4 664.0,648.7 658.3,647.3C652.7,645.9 647.1,644.8 641.4,643.7C635.7,642.7 630.0,641.9 624.3,641.3C618.6,640.6 612.8,640.1 607.1,639.7C601.3,639.2 595.5,639.0 589.7,638.7C583.9,638.5 578.1,638.4 572.3,638.3C566.5,638.2 560.6,638.2 554.8,638.1C549.0,638.1 540.2,638.0 537.3,638.0M637.3,662.7C635.3,661.8 629.5,659.0 625.5,657.4C621.6,655.8 617.5,654.4 613.5,653.2C609.4,651.9 605.3,650.9 601.2,649.9C597.0,649.0 592.8,648.2 588.6,647.5C584.4,646.8 580.2,646.2 576.0,645.7C571.7,645.1 567.5,644.7 563.2,644.3C558.9,643.9 554.6,643.5 550.3,643.1C546.0,642.8 539.6,642.2 537.5,642.0M608.9,675.5C607.6,674.4 603.8,671.0 601.2,669.1C598.5,667.1 595.7,665.4 592.9,663.7C590.1,662.1 587.2,660.7 584.3,659.3C581.3,658.0 578.3,656.8 575.2,655.7C572.2,654.5 569.0,653.5 565.9,652.6C562.8,651.6 559.6,650.7 556.4,649.9C553.2,649.0 550.0,648.2 546.8,647.4C543.6,646.6 538.8,645.4 537.2,645.0M582.1,684.9C581.4,683.9 579.1,680.8 577.5,678.9C575.9,677.0 574.2,675.2 572.4,673.4C570.6,671.7 568.8,670.0 566.9,668.4C565.0,666.8 563.1,665.3 561.1,663.8C559.1,662.3 557.1,660.8 555.0,659.4C553.0,658.0 550.9,656.7 548.8,655.3C546.7,653.9 544.6,652.6 542.5,651.3C540.3,649.9 537.2,648.0 536.1,647.3M805.8,482.1C802.5,483.5 792.7,487.5 786.1,490.2C779.4,492.8 772.8,495.4 766.2,497.9C759.6,500.5 752.9,503.0 746.3,505.5C739.6,508.0 733.0,510.4 726.3,512.8C719.6,515.2 712.9,517.6 706.2,520.0C699.6,522.4 689.5,525.9 686.2,527.0M803.0,450.3C800.1,452.3 791.6,458.6 785.8,462.6C780.0,466.5 774.1,470.2 768.2,473.9C762.3,477.5 756.2,481.0 750.2,484.3C744.1,487.7 738.0,490.9 731.9,494.0C725.7,497.1 719.5,500.1 713.2,503.1C707.0,506.0 697.5,510.2 694.4,511.6M794.0,423.4C791.7,426.0 785.0,434.1 780.3,439.1C775.5,444.1 770.6,448.7 765.5,453.2C760.5,457.7 755.3,461.8 749.9,465.9C744.6,469.9 739.2,473.6 733.6,477.3C728.1,480.9 722.4,484.4 716.7,487.7C711.0,491.0 702.2,495.7 699.3,497.2M777.8,402.3C776.1,405.2 771.4,414.2 767.8,419.7C764.3,425.2 760.4,430.4 756.4,435.3C752.4,440.2 748.1,444.7 743.7,449.1C739.3,453.5 734.7,457.6 729.9,461.5C725.1,465.4 720.2,469.1 715.1,472.6C710.1,476.2 702.2,481.1 699.6,482.8M759.7,386.5C758.6,389.5 755.8,398.9 753.4,404.6C751.0,410.3 748.2,415.6 745.2,420.6C742.2,425.6 738.9,430.3 735.3,434.8C731.8,439.3 728.0,443.4 724.0,447.4C720.0,451.4 715.8,455.1 711.4,458.7C707.1,462.3 700.1,467.3 697.9,469.0M737.6,376.8C737.1,379.6 736.0,388.6 734.7,394.1C733.4,399.6 731.6,404.6 729.6,409.5C727.5,414.3 725.1,418.8 722.5,423.2C719.9,427.5 716.9,431.5 713.8,435.3C710.6,439.2 707.2,442.8 703.6,446.3C700.0,449.8 694.1,454.6 692.2,456.2M709.1,344.6C709.3,347.4 710.1,356.3 710.0,361.8C709.9,367.4 709.2,372.6 708.3,377.7C707.3,382.8 705.9,387.7 704.3,392.4C702.6,397.1 700.5,401.5 698.3,405.9C696.0,410.3 693.4,414.5 690.6,418.6C687.8,422.7 683.1,428.5 681.6,430.5M708.1,391.3C708.3,393.6 709.2,400.0 708.8,404.9C708.5,409.9 707.5,415.2 705.9,420.9C704.3,426.5 702.2,432.4 699.3,438.7C696.4,444.9 692.6,452.1 688.6,458.3C684.5,464.5 679.8,470.3 675.0,475.8C670.1,481.3 662.1,488.7 659.6,491.3M684.9,404.9C684.9,407.1 685.3,413.2 684.6,418.1C683.9,422.9 682.8,428.4 680.7,434.0C678.6,439.6 675.6,445.8 672.1,451.7C668.6,457.6 664.2,463.7 659.5,469.2C654.9,474.7 646.7,482.1 644.1,484.7M657.8,415.1C657.8,417.1 658.2,422.8 657.8,427.1C657.3,431.4 656.6,436.1 655.0,441.0C653.5,446.0 651.2,451.9 648.6,456.8C646.0,461.7 642.3,466.3 639.4,470.5C636.5,474.7 632.7,480.3 631.3,482.2M654.4,464.7C655.4,462.9 658.4,457.2 660.3,454.3C662.1,451.4 664.4,447.2 665.5,447.4C666.6,447.6 666.5,452.1 666.7,455.4C666.9,458.7 666.6,465.3 666.6,467.3M636.0,456.9C636.8,455.0 639.2,448.9 640.7,445.9C642.3,442.9 644.1,438.6 645.2,438.7C646.3,438.8 646.8,443.3 647.3,446.5C647.9,449.8 648.3,456.2 648.4,458.2M671.7,485.4C673.0,483.9 676.9,478.8 679.2,476.3C681.5,473.7 684.5,469.9 685.5,470.2C686.5,470.5 685.7,474.9 685.3,478.2C685.0,481.5 683.5,488.1 683.1,490.1M736.6,534.6C735.6,534.8 732.5,535.3 730.3,535.9C728.2,536.5 725.0,537.8 723.9,538.1M715.2,563.9C714.1,564.0 710.9,564.2 708.8,564.6C706.6,564.9 703.4,565.9 702.3,566.2M690.1,591.3C689.1,591.2 685.8,590.9 683.7,591.0C681.5,591.1 678.2,591.6 677.1,591.7M665.7,612.0C664.7,611.8 661.5,610.9 659.4,610.6C657.3,610.3 654.0,610.2 653.0,610.2M643.2,631.9C642.2,631.5 639.2,630.1 637.2,629.4C635.2,628.7 632.1,628.1 631.1,627.9M613.8,644.9C612.9,644.4 610.2,642.4 608.3,641.4C606.4,640.4 603.6,639.3 602.7,638.8M696.9,536.9C695.8,537.2 692.7,537.8 690.6,538.4C688.5,539.1 685.3,540.5 684.3,540.9M683.9,555.3C682.9,555.5 679.7,555.8 677.6,556.3C675.4,556.9 672.2,558.1 671.1,558.4M659.6,575.1C658.5,575.2 655.3,575.2 653.2,575.5C651.0,575.8 647.7,576.7 646.6,576.9M635.4,593.1C634.3,593.0 631.1,592.7 628.9,592.8C626.7,592.8 623.4,593.4 622.4,593.5M617.3,605.5C616.3,605.4 613.1,604.7 610.9,604.5C608.8,604.4 605.5,604.6 604.4,604.6M599.1,620.0C598.1,619.7 595.0,618.6 592.9,618.1C590.8,617.7 587.6,617.4 586.5,617.2M581.1,632.4C580.1,631.9 577.2,630.3 575.2,629.5C573.3,628.7 570.3,627.9 569.3,627.5M762.2,508.1C761.2,508.4 758.2,509.2 756.1,510.0C754.1,510.8 751.0,512.4 749.9,512.9M725.8,512.7C724.8,513.1 721.7,513.9 719.7,514.7C717.6,515.5 714.5,517.1 713.4,517.6M685.1,519.3C684.1,519.6 681.1,520.4 679.0,521.2C677.0,522.0 673.8,523.6 672.8,524.1M647.3,538.9C646.3,539.2 643.2,539.9 641.1,540.6C639.1,541.4 635.9,542.9 634.9,543.3M617.2,561.8C616.2,562.1 613.0,562.5 610.9,563.1C608.8,563.7 605.6,565.0 604.5,565.4M597.4,582.1C596.3,582.2 593.1,582.4 591.0,582.8C588.8,583.1 585.5,584.1 584.5,584.4" fill="none" stroke="#0f8f0f" stroke-opacity="0.32" stroke-width="1.2" stroke-linecap="round"/>
<path d="M769.7,526.8C764.6,528.6 749.1,533.9 738.8,537.5C728.4,541.0 718.1,544.6 707.8,548.2C697.5,551.8 687.2,555.4 676.8,559.0C666.5,562.6 656.2,566.2 645.9,569.9C635.6,573.5 625.3,577.1 615.0,580.8C604.7,584.4 589.3,589.9 584.1,591.7M765.1,554.0C759.8,555.4 744.1,559.5 733.6,562.3C723.1,565.2 712.6,568.0 702.1,570.9C691.6,573.8 681.1,576.7 670.6,579.6C660.2,582.6 649.7,585.5 639.2,588.5C628.7,591.4 618.3,594.4 607.8,597.4C597.4,600.4 581.7,604.9 576.4,606.4M738.4,584.5C733.6,585.0 719.4,586.3 709.9,587.5C700.5,588.7 691.1,590.1 681.7,591.6C672.2,593.2 662.9,594.9 653.5,596.7C644.1,598.5 634.7,600.5 625.4,602.5C616.1,604.6 606.7,606.7 597.4,608.9C588.1,611.1 574.1,614.4 569.4,615.5M719.2,610.4C714.9,610.4 702.2,610.2 693.7,610.5C685.2,610.7 676.8,611.2 668.3,611.8C659.8,612.3 651.3,613.1 642.9,614.0C634.4,614.9 625.9,615.9 617.5,617.0C609.0,618.1 600.6,619.3 592.1,620.5C583.7,621.8 571.0,623.7 566.8,624.4M687.4,632.4C683.9,632.0 673.4,630.4 666.3,629.8C659.3,629.1 652.2,628.8 645.1,628.5C638.1,628.3 631.0,628.3 623.9,628.4C616.8,628.6 609.7,628.9 602.5,629.2C595.4,629.6 588.3,630.1 581.2,630.6C574.0,631.1 563.3,632.0 559.8,632.3M658.0,648.4C655.1,647.8 646.7,645.8 641.0,644.8C635.3,643.8 629.6,643.0 623.9,642.3C618.2,641.7 612.4,641.2 606.7,640.7C600.9,640.3 595.1,640.0 589.3,639.8C583.5,639.6 577.7,639.5 571.9,639.4C566.1,639.3 557.3,639.2 554.4,639.2M625.1,658.5C623.1,657.8 617.1,655.5 613.1,654.2C609.0,653.0 604.9,652.0 600.8,651.0C596.6,650.1 592.4,649.3 588.2,648.6C584.0,647.9 579.8,647.3 575.6,646.8C571.3,646.2 567.1,645.8 562.8,645.4C558.5,644.9 552.1,644.4 549.9,644.2M600.8,670.2C599.4,669.3 595.4,666.5 592.5,664.8C589.7,663.2 586.8,661.8 583.9,660.4C580.9,659.1 577.9,657.9 574.8,656.8C571.8,655.6 568.7,654.6 565.5,653.7C562.4,652.7 559.2,651.8 556.0,651.0C552.8,650.1 548.0,648.9 546.4,648.5M577.1,680.0C576.2,679.1 573.8,676.3 572.0,674.5C570.2,672.8 568.4,671.1 566.5,669.5C564.6,667.9 562.7,666.3 560.7,664.9C558.7,663.4 556.7,661.9 554.6,660.5C552.6,659.1 550.5,657.7 548.4,656.4C546.3,655.0 543.1,653.0 542.1,652.4M735.0,535.9C734.1,536.2 731.4,536.9 729.2,537.4C727.0,538.0 723.1,539.0 721.8,539.3M713.6,565.3C712.6,565.4 709.9,565.8 707.6,566.1C705.4,566.5 701.4,567.1 700.2,567.3M688.5,592.6C687.5,592.6 684.8,592.5 682.5,592.5C680.3,592.6 676.3,592.8 675.0,592.8M664.1,613.3C663.1,613.1 660.5,612.5 658.3,612.1C656.0,611.8 652.1,611.4 650.9,611.3M641.6,633.3C640.7,632.9 638.2,631.7 636.1,631.0C634.0,630.2 630.2,629.3 629.0,629.0M612.2,646.3C611.4,645.7 609.1,644.0 607.2,642.9C605.2,641.9 601.7,640.5 600.6,640.0M695.3,538.3C694.3,538.6 691.7,539.4 689.5,540.0C687.3,540.6 683.4,541.7 682.2,542.0M682.3,556.6C681.3,556.8 678.6,557.4 676.4,557.9C674.2,558.4 670.3,559.3 669.0,559.5M658.0,576.5C657.0,576.6 654.3,576.8 652.0,577.1C649.8,577.3 645.8,577.9 644.5,578.0M633.8,594.4C632.8,594.4 630.0,594.3 627.8,594.3C625.5,594.4 621.5,594.6 620.3,594.6M615.7,606.9C614.7,606.7 612.0,606.3 609.8,606.1C607.5,605.9 603.6,605.8 602.3,605.7M597.5,621.3C596.5,621.0 593.9,620.2 591.7,619.7C589.6,619.2 585.7,618.6 584.4,618.4M579.5,633.8C578.6,633.3 576.1,631.9 574.1,631.0C572.0,630.2 568.3,629.1 567.2,628.7M760.6,509.4C759.7,509.8 757.1,510.8 755.0,511.6C752.9,512.3 749.0,513.6 747.8,514.0M724.2,514.1C723.2,514.4 720.6,515.5 718.5,516.2C716.4,517.0 712.5,518.3 711.3,518.7M683.5,520.6C682.6,521.0 680.0,522.0 677.9,522.7C675.7,523.5 671.9,524.8 670.7,525.2M645.7,540.2C644.7,540.6 642.1,541.5 640.0,542.2C637.8,542.9 634.0,544.1 632.7,544.4M615.6,563.2C614.6,563.4 612.0,564.1 609.8,564.7C607.6,565.2 603.7,566.2 602.4,566.5M595.8,583.5C594.8,583.6 592.1,584.0 589.8,584.3C587.6,584.7 583.6,585.3 582.4,585.5" fill="none" stroke="#3cf03c" stroke-opacity="0.5" stroke-width="1.4" stroke-linecap="round"/>
<path d="M624.8,474.6C625.3,476.2 626.8,480.2 627.7,484.1C628.5,488.0 629.6,493.7 629.7,498.2C629.8,502.7 629.3,507.1 628.3,511.3C627.4,515.4 625.7,519.3 624.2,523.0C622.6,526.7 621.0,530.2 619.1,533.5C617.1,536.7 614.8,539.8 612.4,542.6C610.1,545.5 607.7,548.0 605.0,550.6C602.3,553.1 599.2,555.7 596.0,558.1C592.9,560.4 589.5,562.7 586.1,564.9C582.7,567.1 579.3,569.4 575.8,571.3C572.3,573.3 568.4,575.0 565.0,576.7C561.6,578.5 558.4,580.0 555.4,581.6C552.3,583.2 549.1,584.4 546.6,586.1C544.0,587.7 541.1,590.6 540.0,591.5" fill="none" stroke="#0c7a0c" stroke-opacity="0.55" stroke-width="0.9"/>
<path d="M534.6,635.4C533.1,636.2 529.5,638.7 526.1,640.1C522.8,641.5 518.5,642.9 514.5,644.0C510.4,645.1 505.4,646.0 501.7,646.5C498.0,647.1 494.0,647.2 492.4,647.4" fill="none" stroke="#0f8a0f" stroke-width="2.2" stroke-opacity="0.7"/>
<ellipse cx="482.6" cy="638.9" rx="10.6" ry="13.8" fill="url(#knobL)" transform="rotate(-6 482.6 638.9)"/>
<ellipse cx="490.0" cy="638.8" rx="2.2" ry="12.6" fill="none" stroke="#0f8f0f" stroke-width="1" stroke-opacity="0.8" transform="rotate(-6 490.0 638.8)"/>
<path d="M549.2,587.0C548.2,587.6 544.9,589.1 543.2,590.5C541.5,591.8 540.1,593.6 539.1,595.0C538.0,596.5 537.0,598.4 536.6,599.1" fill="none" stroke="#c8ffc8" stroke-width="1.1" stroke-opacity="0.9"/>
<path d="M579.6,580.0L549.2,587.0M572.4,592.7L545.4,596.5M567.3,604.7L540.9,605.7M562.8,613.5L540.9,614.3M558.8,621.8L538.7,622.0M554.1,629.6L537.1,629.6" fill="none" stroke="#4cf04c" stroke-width="1" stroke-opacity="0.7"/>
<path d="M579.6,580.0L549.2,587.0M572.4,592.7L545.4,596.5M567.3,604.7L540.9,605.7M562.8,613.5L540.9,614.3M558.8,621.8L538.7,622.0M554.1,629.6L537.1,629.6" fill="none" stroke="#0d7a0d" stroke-width="0.8" stroke-opacity="0.55" transform="translate(0,-1.1)" stroke-dasharray="2 1.5"/>
<path d="M527.5,624.5L520.9,642.9M520.4,625.1L513.8,643.8M513.4,625.7L506.7,644.6M506.3,626.3L499.6,645.5M499.3,626.9L492.5,646.4" fill="none" stroke="#0f8a0f" stroke-width="0.9" stroke-opacity="0.55"/>
<path d="M526.2,646.0C524.9,645.8 521.6,645.0 518.7,644.9C515.7,644.9 512.2,645.0 508.6,645.6C505.0,646.1 498.3,647.6 497.1,648.4C495.9,649.1 499.2,649.7 501.4,650.1C503.5,650.5 506.9,651.0 510.0,650.8C513.2,650.7 517.6,649.8 520.3,649.0C523.0,648.2 525.2,646.5 526.2,646.0Z" fill="#2ad82a"/>
<path d="M7,817.76L917,834.51" stroke="#ff0000" stroke-width="2.2" fill="none"/>
</svg>

<span class="t" style="right:289px;top:110px">Print settings:</span>
<div class="combo" style="left:995px;top:104px;width:256px;height:24px"><svg width="16" height="16" viewBox="0 0 16 16" style="position:absolute;left:6px;top:3px">
<polygon points="15.24,6.46 15.24,9.54 12.99,10.05 12.98,10.08 14.21,12.03 12.03,14.21 10.08,12.98 10.05,12.99 9.54,15.24 6.46,15.24 5.95,12.99 5.92,12.98 3.97,14.21 1.79,12.03 3.02,10.08 3.01,10.05 0.76,9.54 0.76,6.46 3.01,5.95 3.02,5.92 1.79,3.97 3.97,1.79 5.92,3.02 5.95,3.01 6.46,0.76 9.54,0.76 10.05,3.01 10.08,3.02 12.03,1.79 14.21,3.97 12.98,5.92 12.99,5.95" fill="#bdbdbd" stroke="#858585" stroke-width="0.8"/>
<circle cx="8" cy="8" r="4.1" fill="none" stroke="#e6e6e6" stroke-width="1.3"/>
<circle cx="8" cy="8" r="2.3" fill="#f4f3ec" stroke="#858585" stroke-width="0.8"/></svg><span class="t" style="left:26px;top:5px">- default -</span><div class="dd"><svg width="9" height="6" viewBox="0 0 9 6"><path d="M0.8 0.8 L4.5 4.5 L8.2 0.8" stroke="#4d6185" stroke-width="1.9" fill="none"/></svg></div></div>
<svg width="16" height="16" viewBox="0 0 16 16" style="position:absolute;left:1256px;top:108px">
<polygon points="15.24,6.46 15.24,9.54 12.99,10.05 12.98,10.08 14.21,12.03 12.03,14.21 10.08,12.98 10.05,12.99 9.54,15.24 6.46,15.24 5.95,12.99 5.92,12.98 3.97,14.21 1.79,12.03 3.02,10.08 3.01,10.05 0.76,9.54 0.76,6.46 3.01,5.95 3.02,5.92 1.79,3.97 3.97,1.79 5.92,3.02 5.95,3.01 6.46,0.76 9.54,0.76 10.05,3.01 10.08,3.02 12.03,1.79 14.21,3.97 12.98,5.92 12.99,5.95" fill="#bdbdbd" stroke="#858585" stroke-width="0.8"/>
<circle cx="8" cy="8" r="4.1" fill="none" stroke="#e6e6e6" stroke-width="1.3"/>
<circle cx="8" cy="8" r="2.3" fill="#f4f3ec" stroke="#858585" stroke-width="0.8"/></svg>
<span class="t" style="right:289px;top:135px">Filament:</span>
<div class="combo" style="left:995px;top:129px;width:256px;height:24px"><span class="t" style="left:26px;top:5px">My Settings</span><div class="dd"><svg width="9" height="6" viewBox="0 0 9 6"><path d="M0.8 0.8 L4.5 4.5 L8.2 0.8" stroke="#4d6185" stroke-width="1.9" fill="none"/></svg></div></div>
<svg width="16" height="16" viewBox="0 0 16 16" style="position:absolute;left:1256px;top:133px">
<polygon points="15.24,6.46 15.24,9.54 12.99,10.05 12.98,10.08 14.21,12.03 12.03,14.21 10.08,12.98 10.05,12.99 9.54,15.24 6.46,15.24 5.95,12.99 5.92,12.98 3.97,14.21 1.79,12.03 3.02,10.08 3.01,10.05 0.76,9.54 0.76,6.46 3.01,5.95 3.02,5.92 1.79,3.97 3.97,1.79 5.92,3.02 5.95,3.01 6.46,0.76 9.54,0.76 10.05,3.01 10.08,3.02 12.03,1.79 14.21,3.97 12.98,5.92 12.99,5.95" fill="#bdbdbd" stroke="#858585" stroke-width="0.8"/>
<circle cx="8" cy="8" r="4.1" fill="none" stroke="#e6e6e6" stroke-width="1.3"/>
<circle cx="8" cy="8" r="2.3" fill="#f4f3ec" stroke="#858585" stroke-width="0.8"/></svg>
<span class="t" style="right:289px;top:160px">Printer:</span>
<div class="combo" style="left:995px;top:154px;width:256px;height:24px"><svg width="16" height="16" viewBox="0 0 16 16" style="position:absolute;left:6px;top:3px">
<path d="M3.5 3.5 h9 v4 h-9z" fill="#f4f4f4" stroke="#777" stroke-width="0.9"/>
<rect x="1" y="6.5" width="14" height="6.5" rx="1.2" fill="#d8d8d8" stroke="#666" stroke-width="0.9"/>
<rect x="3" y="10" width="10" height="3.6" fill="#f8f8f8" stroke="#777" stroke-width="0.7"/>
<rect x="2.2" y="8" width="11.6" height="1" fill="#9a9a9a"/></svg><span class="t" style="left:26px;top:5px">My Settings</span><div class="dd"><svg width="9" height="6" viewBox="0 0 9 6"><path d="M0.8 0.8 L4.5 4.5 L8.2 0.8" stroke="#4d6185" stroke-width="1.9" fill="none"/></svg></div></div>
<svg width="16" height="16" viewBox="0 0 16 16" style="position:absolute;left:1256px;top:158px">
<polygon points="15.24,6.46 15.24,9.54 12.99,10.05 12.98,10.08 14.21,12.03 12.03,14.21 10.08,12.98 10.05,12.99 9.54,15.24 6.46,15.24 5.95,12.99 5.92,12.98 3.97,14.21 1.79,12.03 3.02,10.08 3.01,10.05 0.76,9.54 0.76,6.46 3.01,5.95 3.02,5.92 1.79,3.97 3.97,1.79 5.92,3.02 5.95,3.01 6.46,0.76 9.54,0.76 10.05,3.01 10.08,3.02 12.03,1.79 14.21,3.97 12.98,5.92 12.99,5.95" fill="#bdbdbd" stroke="#858585" stroke-width="0.8"/>
<circle cx="8" cy="8" r="4.1" fill="none" stroke="#e6e6e6" stroke-width="1.3"/>
<circle cx="8" cy="8" r="2.3" fill="#f4f3ec" stroke="#858585" stroke-width="0.8"/></svg>
<div class="btn" style="left:1050px;top:179px;width:101px;height:28px"><svg width="19" height="17" viewBox="0 0 19 17" style="left:1px;top:4px;overflow:visible"><path d="M0.8 4.8 L7 1.6 L15 4.2 L15 10.6 L8.8 14.8 L0.8 11.2Z" fill="#dcdcdc" stroke="#a9a9a9" stroke-width="0.8"/>
<path d="M0.8 4.8 L8.8 7.8 L8.8 14.8 L0.8 11.2Z" fill="#e6e6e6"/>
<path d="M8.8 7.8 L15 4.2 L15 10.6 L8.8 14.8Z" fill="#bcbcbc"/>
<path d="M0.8 4.8 L7 1.6 L15 4.2 L8.8 7.8Z" fill="#f4f4f4"/>
<path d="M0.8 4.8 L8.8 7.8 L15 4.2M8.8 7.8V14.8" stroke="#c9c9c9" stroke-width="0.6" fill="none"/>
<g fill="#fbfbfb" stroke="#b4b4b4" stroke-width="0.55"><path d="M2.9 3.6v1.1a2 1.15 0 0 0 4 0v-1.1z"/><ellipse cx="4.9" cy="3.6" rx="2" ry="1.15"/>
<path d="M6.8 1.9v1.1a2 1.15 0 0 0 4 0v-1.1z"/><ellipse cx="8.8" cy="1.9" rx="2" ry="1.15"/>
<path d="M6.6 5.2v1.1a2 1.15 0 0 0 4 0v-1.1z"/><ellipse cx="8.6" cy="5.2" rx="2" ry="1.15"/>
<path d="M10.4 3.5v1.1a2 1.15 0 0 0 4 0v-1.1z"/><ellipse cx="12.4" cy="3.5" rx="2" ry="1.15"/></g><path d="M5.8 12 h4.4 v-2.3 l5.4 3.7 l-5.4 3.7 v-2.3 h-4.4z" fill="#6cc04a" stroke="#2f7d22" stroke-width="0.8"/></svg><span class="t" style="left:17px;top:7px">Export STL...</span></div>
<div class="btn" style="left:1153px;top:179px;width:118px;height:28px"><svg width="16" height="16" viewBox="0 0 16 16" style="left:2px;top:4px;overflow:visible">
<polygon points="15.24,6.46 15.24,9.54 12.99,10.05 12.98,10.08 14.21,12.03 12.03,14.21 10.08,12.98 10.05,12.99 9.54,15.24 6.46,15.24 5.95,12.99 5.92,12.98 3.97,14.21 1.79,12.03 3.02,10.08 3.01,10.05 0.76,9.54 0.76,6.46 3.01,5.95 3.02,5.92 1.79,3.97 3.97,1.79 5.92,3.02 5.95,3.01 6.46,0.76 9.54,0.76 10.05,3.01 10.08,3.02 12.03,1.79 14.21,3.97 12.98,5.92 12.99,5.95" fill="#bdbdbd" stroke="#858585" stroke-width="0.8"/>
<circle cx="8" cy="8" r="4.1" fill="none" stroke="#e6e6e6" stroke-width="1.3"/>
<circle cx="8" cy="8" r="2.3" fill="#f4f3ec" stroke="#858585" stroke-width="0.8"/><path d="M5.8 12 h4.4 v-2.3 l5.4 3.7 l-5.4 3.7 v-2.3 h-4.4z" fill="#6cc04a" stroke="#2f7d22" stroke-width="0.8"/></svg><span class="t" style="left:17px;top:7px">Export G-code...</span></div>
<div class="grp" style="left:922px;top:219px;width:350px;height:53px"></div>
<span class="leg" style="left:928px;top:214px">Support material</span>
<span class="t" style="left:932px;top:236px">Generate support</span>
<span class="t" style="left:932px;top:249px">material:</span>
<div class="abs" style="left:1249px;top:242px;width:13px;height:13px;box-sizing:border-box;border:1px solid #1c5180;background:linear-gradient(135deg,#dcdcd7 0,#f4f4f1 50%,#ffffff 100%)"><svg width="11" height="11" viewBox="0 0 11 11" style="position:absolute;left:0;top:0"><path d="M2 4.6 L4.4 7 L9 2.4" stroke="#21a121" stroke-width="2.1" fill="none"/></svg></div>
<div class="grp" style="left:922px;top:811px;width:350px;height:92px"></div>
<span class="leg" style="left:928px;top:806px">Info</span>
<span class="t" style="left:927px;top:825px">Object:</span>
<div class="combo" style="left:963px;top:821px;width:304px;height:21px"><span class="t" style="left:3px;top:4px">PM3D_Wings new (repaired).stl</span><div class="dd"><svg width="9" height="6" viewBox="0 0 9 6"><path d="M0.8 0.8 L4.5 4.5 L8.2 0.8" stroke="#4d6185" stroke-width="1.9" fill="none"/></svg></div></div>
<span class="t" style="left:927px;top:848px">Copies:</span>
<span class="t" style="left:979px;top:848px">1</span>
<span class="t" style="left:1063px;top:848px">Size:</span>
<span class="t" style="left:1113px;top:848px">147.90 x 130.00 x 5.72</span>
<span class="t" style="left:927px;top:867px">Volume:</span>
<span class="t" style="left:979px;top:867px">9768.87</span>
<span class="t" style="left:1063px;top:867px">Facets:</span>
<span class="t" style="left:1113px;top:867px">1647624 (199 shells)</span>
<span class="t" style="left:927px;top:886px">Materials:</span>
<span class="t" style="left:979px;top:886px">1</span>
<span class="t" style="left:1063px;top:886px">Manifold:</span>
<span class="t" style="left:1113px;top:886px">Yes</span>

<div class="btab" style="left:7px;top:882px;width:43px;height:21px"></div><span class="t" style="left:13px;top:889px">3D</span>
<div class="btab" style="left:50px;top:884px;width:40px;height:18px"></div><span class="t" style="left:55px;top:887px">2D</span>
<div class="btab" style="left:92px;top:884px;width:47px;height:18px"></div><span class="t" style="left:96px;top:887px">Preview</span>
<div class="btab" style="left:141px;top:884px;width:44px;height:18px"></div><span class="t" style="left:146px;top:887px">Layers</span>
</body>
</html>
